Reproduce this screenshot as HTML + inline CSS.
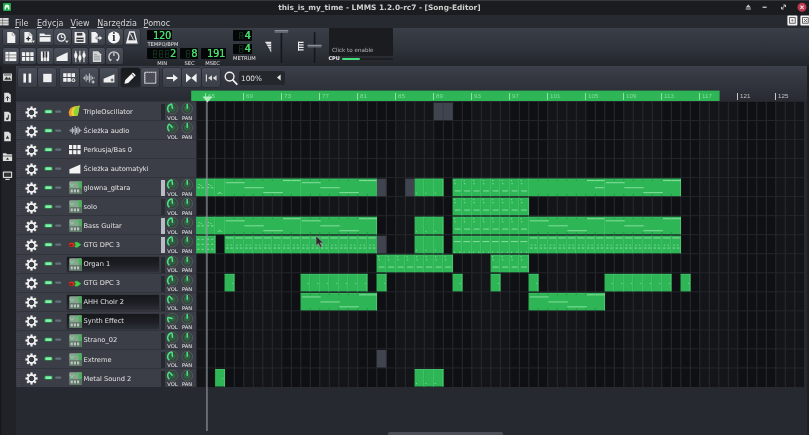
<!DOCTYPE html><html lang="pl"><head><meta charset="utf-8"><title>this_is_my_time - LMMS 1.2.0-rc7 - [Song-Editor]</title><style>
*{margin:0;padding:0;box-sizing:border-box}
html,body{width:809px;height:435px;overflow:hidden;background:#262930}
body{position:relative;filter:blur(.4px);font-family:"DejaVu Sans","Liberation Sans",sans-serif;color:#d8d8d8}
.a{position:absolute}
.m::first-letter{text-decoration:underline}
.t{position:absolute;white-space:nowrap;line-height:1}
#title{left:0;top:0;width:809px;height:15px;background:#1b1c1f}
#menu{left:0;top:14.5px;width:809px;height:14px;background:#272b31}
#tb{left:0;top:28px;width:809px;height:38px;background:linear-gradient(#3a3e47,#30343c 50%,#23262b)}
#side{left:0;top:66px;width:16px;height:369px;background:#202228;box-shadow:inset 1.5px 0 0 #17181b}
#se{left:16px;top:66px;width:793px;height:36px;background:linear-gradient(#3c404a,#33363f 40%,#272a31)}
#tl{left:16px;top:90px;width:793px;height:12px;background:transparent}
#tracks{left:16px;top:101px;width:180px;height:286px;background:#3b3e47}
#grid{left:196px;top:101px;width:608px;height:286px;background:#0f1013}
.btn{position:absolute;width:16.4px;height:16px;border-radius:2px;background:linear-gradient(#4c505a,#3b3f48);box-shadow:0 0 0 .5px #24272c}
.sbtn{position:absolute;width:18.6px;height:19px;border-radius:2px;background:linear-gradient(#4a4e58,#3a3e47);box-shadow:0 0 0 .5px #24272c}
.lcd{position:absolute;background:#050607;border-radius:1px;color:#46e06c;font-family:"DejaVu Sans Condensed","DejaVu Sans","Liberation Sans",sans-serif;font-weight:normal;text-align:right;line-height:1;overflow:hidden;letter-spacing:-.15px;text-shadow:.35px 0 0 currentColor}
.lab{position:absolute;font-size:5.2px;color:#e6e6e6;white-space:nowrap;line-height:1}
.clip{position:absolute;background:#2db556;height:18px;box-shadow:inset -0.7px 0 0 #27a04b, inset .5px 0 0 #46c56c}
.gclip{position:absolute;background:#40444f;height:18px}
.n{position:absolute;height:.9px;background:#8fe3a3}
.row{position:absolute;left:0;width:180px;height:19px;border-top:1px solid #31343b}
.name{position:absolute;left:67.5px;top:6.8px;font-size:6.66px;color:#e4e4e4;white-space:nowrap;line-height:1}
.kl{position:absolute;font-size:5.2px;color:#ececec;top:13.5px;line-height:1}
</style></head><body>
<div class="a" id="title"></div>
<div class="a" style="left:0;top:0;width:809px;height:1px;background:#35373a"></div>
<svg class="a" style="left:3px;top:3px" width="8" height="8" viewBox="0 0 8 8"><rect width="8" height="8" rx="1" fill="#1fa84a"/><path d="M1.6 6.6V4a2.4 2.4 0 0 1 4.8 0v2.6H4.9V4.6H3.1v2z" fill="#e9fff0"/></svg>
<div class="t" style="left:0;width:758.8px;text-align:center;top:4.2px;font-size:7.42px;font-weight:bold;color:#cfcfcf">this_is_my_time - LMMS 1.2.0-rc7 - [Song-Editor]</div>
<svg class="a" style="left:740px;top:0" width="69" height="15" viewBox="0 0 69 15"><path d="M5.7 7.6 8.3 4.6 10.9 7.6z M5.7 8.4h5.2v1.2H5.7z" fill="#c9c9c9"/><rect x="22.6" y="6.6" width="4" height="1.3" fill="#c9c9c9"/><path d="M41.6 8.9 45.4 5.1M43.4 5h2.1v2.1M41.5 6.9V9h2.1" stroke="#c9c9c9" stroke-width="1" fill="none"/><circle cx="62" cy="7.2" r="4.5" fill="#bb3a52"/><path d="M60.4 5.6 63.6 8.8M63.6 5.6 60.4 8.8" stroke="#f4dfe2" stroke-width="1.1"/></svg>
<div class="a" id="menu"></div>
<svg class="a" style="left:0;top:18px" width="9" height="8" viewBox="0 0 9 8"><rect width="8.6" height="7.4" fill="#d9d9d9"/><path d="M0 2.4h9M0 5h9M2.6 0v8" stroke="#555" stroke-width=".6"/></svg>
<div class="t m" style="left:15px;top:19.6px;font-size:8px;color:#d4d4d4">File</div>
<div class="t m" style="left:37px;top:19.6px;font-size:8px;color:#d4d4d4">Edycja</div>
<div class="t m" style="left:70.6px;top:19.6px;font-size:8px;color:#d4d4d4">View</div>
<div class="t m" style="left:97.3px;top:19.6px;font-size:8px;color:#d4d4d4">Narzędzia</div>
<div class="t m" style="left:143.6px;top:19.6px;font-size:8px;color:#d4d4d4">Pomoc</div>
<svg class="a" style="left:787.4px;top:15.2px" width="22" height="11" viewBox="0 0 22 11"><rect x=".4" y=".4" width="10" height="10" rx="1" fill="#f2f2f2"/><rect x="2.6" y="2.6" width="5.6" height="5.6" fill="none" stroke="#444" stroke-width=".8"/><path d="M4 5.4h2.8M5.4 4v2.8" stroke="#666" stroke-width=".6"/><rect x="13.4" y=".4" width="10" height="10" rx="1" fill="#f2f2f2"/><rect x="15.6" y="2.6" width="5.6" height="5.6" fill="none" stroke="#444" stroke-width=".8"/><path d="M17 4l3 3M20 4l-3 3" stroke="#444" stroke-width=".8"/></svg>
<div class="a" id="tb"></div>
<div class="btn" style="left:2.60px;top:29px"><svg width="16.4" height="17" viewBox="0 0 16.4 17"><path d="M4.2 3h5.2l2.9 2.9v8H4.2z" fill="#f0f0f0"/><path d="M9.2 3.2v3h3" fill="none" stroke="#8d9096" stroke-width=".7"/></svg></div>
<div class="btn" style="left:19.88px;top:29px"><svg width="16.4" height="17" viewBox="0 0 16.4 17"><path d="M4.4 3h5l2.9 2.9v7.5H4.4z" fill="#f0f0f0"/><path d="M9.2 3.2v3h3" fill="none" stroke="#8d9096" stroke-width=".7"/><path d="M6.2 9.7h4.2M8.3 7.6v4.2" stroke="#2a2c31" stroke-width="1.3"/><path d="M11.6 11.6h3.6l-1.8 2.4z" fill="#f0f0f0" stroke="#42464f" stroke-width=".4"/></svg></div>
<div class="btn" style="left:37.16px;top:29px"><svg width="16.4" height="17" viewBox="0 0 16.4 17"><path d="M2.6 4.4h4.6l1 1.3h5.4v7.1H2.6z" fill="#f0f0f0"/><path d="M2.6 7.6h11" stroke="#42464f" stroke-width="1"/></svg></div>
<div class="btn" style="left:54.44px;top:29px"><svg width="16.4" height="17" viewBox="0 0 16.4 17"><circle cx="7.4" cy="8.4" r="3.7" fill="none" stroke="#f0f0f0" stroke-width="1.4"/><path d="M7.4 6.2v2.4h2" stroke="#f0f0f0" stroke-width="1" fill="none"/><path d="M10.8 11.6h4l-2 2.6z" fill="#f0f0f0" stroke="#42464f" stroke-width=".4"/></svg></div>
<div class="btn" style="left:71.72px;top:29px"><svg width="16.4" height="17" viewBox="0 0 16.4 17"><path d="M2.6 3.1h9l1.8 1.8V14H2.6z" fill="#f0f0f0"/><rect x="4.8" y="3.8" width="5.6" height="2.8" fill="#3a3d45"/><rect x="4.4" y="8.6" width="7.2" height="4.2" fill="#2a2c31"/><rect x="4.4" y="10.2" width="7.2" height="1" fill="#f0f0f0"/></svg></div>
<div class="btn" style="left:89.00px;top:29px"><svg width="16.4" height="17" viewBox="0 0 16.4 17"><path d="M2.4 3h4.2l2.1 2.1v8.7H2.4z" fill="#f0f0f0"/><path d="M7 8.1h3.2V6.2l3.4 2.8-3.4 2.8V9.9H7z" fill="#f0f0f0" stroke="#3e424a" stroke-width=".6"/></svg></div>
<div class="btn" style="left:106.28px;top:29px"><svg width="16.4" height="17" viewBox="0 0 16.4 17"><circle cx="7.9" cy="8.4" r="6" fill="#f4f4f4"/><text x="7.9" y="12.3" font-family="Liberation Serif,serif" font-weight="bold" font-size="11.5" text-anchor="middle" fill="#2a2c31">i</text></svg></div>
<div class="btn" style="left:123.56px;top:29px"><svg width="16.4" height="17" viewBox="0 0 16.4 17"><path d="M5.2 2.2h5.4l3.2 12.4H1.9z" fill="#f0f0f0"/><path d="M6.2 3.8h3.4l2 7.4H4.3z" fill="#3a3d45"/><path d="M6.2 4.4 9.4 10.6" stroke="#f0f0f0" stroke-width="1"/></svg></div>
<div class="btn" style="left:2.60px;top:48px"><svg width="16.4" height="17" viewBox="0 0 16.4 17"><rect x="2.4" y="3.9" width="11" height="9.2" fill="#f0f0f0"/><path d="M2.4 6.9h11M2.4 9.9h11M5.8 3.9v9.2" stroke="#5a5e67" stroke-width=".7"/></svg></div>
<div class="btn" style="left:19.88px;top:48px"><svg width="16.4" height="17" viewBox="0 0 16.4 17"><g fill="#f0f0f0"><rect x="1.9" y="4.2" width="3.3" height="3.9"/><rect x="6.1" y="4.2" width="3.3" height="3.9"/><rect x="10.3" y="4.2" width="3.3" height="3.9"/><rect x="1.9" y="9" width="3.3" height="3.9"/><rect x="6.1" y="9" width="3.3" height="3.9"/><rect x="10.3" y="9" width="3.3" height="3.9"/></g></svg></div>
<div class="btn" style="left:37.16px;top:48px"><svg width="16.4" height="17" viewBox="0 0 16.4 17"><rect x="3.9" y="3.5" width="8.2" height="9.6" fill="#f0f0f0"/><path d="M6.6 3.5v9.6M9.4 3.5v9.6" stroke="#2a2c31" stroke-width=".6"/><rect x="5.8" y="3.5" width="1.6" height="6" fill="#2a2c31"/><rect x="8.6" y="3.5" width="1.6" height="6" fill="#2a2c31"/></svg></div>
<div class="btn" style="left:54.44px;top:48px"><svg width="16.4" height="17" viewBox="0 0 16.4 17"><path d="M2.5 13.1V9.4l11.2-5.2v8.9z" fill="#f0f0f0"/></svg></div>
<div class="btn" style="left:71.72px;top:48px"><svg width="16.4" height="17" viewBox="0 0 16.4 17"><path d="M3.8 2.8v11.4M7.9 2.8v11.4M12 2.8v11.4" stroke="#f0f0f0" stroke-width="1"/><ellipse cx="3.8" cy="7.4" rx="1.6" ry="2.8" fill="#f0f0f0"/><ellipse cx="7.9" cy="9.8" rx="1.6" ry="2.8" fill="#f0f0f0"/><ellipse cx="12" cy="7.2" rx="1.6" ry="2.8" fill="#f0f0f0"/></svg></div>
<div class="btn" style="left:89.00px;top:48px"><svg width="16.4" height="17" viewBox="0 0 16.4 17"><path d="M3.8 3.2h5.4l3 3v7.9H3.8z" fill="#d6d6d6"/><path d="M5 6.4h3M5 8.2h6M5 10h6M5 11.8h6" stroke="#7d8087" stroke-width=".7"/></svg></div>
<div class="btn" style="left:106.28px;top:48px"><svg width="16.4" height="17" viewBox="0 0 16.4 17"><path d="M4.3 12.3A5 5 0 1 1 11.5 12.3" fill="none" stroke="#d0d0d0" stroke-width="1.4"/><path d="M7.9 4.4v3.6" stroke="#d0d0d0" stroke-width="1.3"/><path d="M2.8 11l1.6 2.6 1.7-2.2zM13 11l-1.6 2.6-1.7-2.2z" fill="#d0d0d0"/></svg></div>
<div class="lcd" style="left:147.4px;top:30px;width:24.8px;height:10.4px;font-size:10.8px;padding:0.50px 1.2px 0 0">120</div>
<div class="lab" style="left:147.4px;top:42.2px">TEMPO/BPM</div>
<div class="lcd" style="left:147.4px;top:48.2px;width:29.8px;height:11px;font-size:10.8px;padding:0.80px 1.2px 0 0">2</div>
<svg class="a" style="left:164.77px;top:49.70px" width="4.4" height="8.00" viewBox="0 0 4.4 8"><path d="M.5.5h3.4v7h-3.4zM.5 4h3.4" fill="none" stroke="#173822" stroke-width=".9"/></svg>
<svg class="a" style="left:158.74px;top:49.70px" width="4.4" height="8.00" viewBox="0 0 4.4 8"><path d="M.5.5h3.4v7h-3.4zM.5 4h3.4" fill="none" stroke="#173822" stroke-width=".9"/></svg>
<svg class="a" style="left:152.71px;top:49.70px" width="4.4" height="8.00" viewBox="0 0 4.4 8"><path d="M.5.5h3.4v7h-3.4zM.5 4h3.4" fill="none" stroke="#173822" stroke-width=".9"/></svg>
<div class="lcd" style="left:180.2px;top:48.2px;width:18.2px;height:11px;font-size:10.8px;padding:0.80px 1.2px 0 0">8</div>
<svg class="a" style="left:185.97px;top:49.70px" width="4.4" height="8.00" viewBox="0 0 4.4 8"><path d="M.5.5h3.4v7h-3.4zM.5 4h3.4" fill="none" stroke="#173822" stroke-width=".9"/></svg>
<div class="lcd" style="left:200.8px;top:48.2px;width:25.4px;height:11px;font-size:10.8px;padding:0.80px 1.2px 0 0">191</div>
<div class="lab" style="left:157.2px;top:60.6px">MIN</div>
<div class="lab" style="left:184.4px;top:60.6px">SEC</div>
<div class="lab" style="left:205.2px;top:60.6px">MSEC</div>
<div class="lcd" style="left:233.4px;top:30px;width:18.4px;height:10.6px;font-size:10.8px;padding:0.60px 1.2px 0 0">4</div>
<svg class="a" style="left:239.37px;top:31.50px" width="4.4" height="7.60" viewBox="0 0 4.4 8"><path d="M.5.5h3.4v7h-3.4zM.5 4h3.4" fill="none" stroke="#173822" stroke-width=".9"/></svg>
<div class="lcd" style="left:233.4px;top:43.6px;width:18.4px;height:10.8px;font-size:10.8px;padding:0.70px 1.2px 0 0">4</div>
<svg class="a" style="left:239.37px;top:45.10px" width="4.4" height="7.80" viewBox="0 0 4.4 8"><path d="M.5.5h3.4v7h-3.4zM.5 4h3.4" fill="none" stroke="#173822" stroke-width=".9"/></svg>
<div class="lab" style="left:233px;top:56px">METRUM</div>
<svg class="a" style="left:262px;top:28px" width="66" height="38" viewBox="0 0 66 38"><rect x="18.6" y="4" width="1.6" height="31" fill="#15171a"/><rect x="12.6" y="2.4" width="13.6" height="2.6" rx=".8" fill="#5f646e"/><rect x="12.6" y="2.2" width="13.6" height=".9" fill="#9aa0aa"/><path d="M3 13.8h6.2v10.6z" fill="#ececec"/><path d="M3 16.2h6.4M4 18.6h5.4M5.4 21h4" stroke="#30333a" stroke-width=".6"/><rect x="51.8" y="4" width="1.6" height="31" fill="#15171a"/><rect x="45.6" y="17" width="14" height="2.6" rx=".8" fill="#5f646e"/><rect x="45.6" y="16.8" width="14" height=".9" fill="#9aa0aa"/><path d="M36 14.4h5.6M36 16.9h5.6M36 19.4h5.6M36 21.9h5.6" stroke="#ececec" stroke-width="1.3"/><path d="M36.5 13.8v8.8" stroke="#ececec" stroke-width="1"/></svg>
<div class="a" style="left:328.8px;top:28px;width:64.6px;height:27.8px;background:#1a1c20;border-radius:1px"></div>
<div class="t" style="left:332px;top:48.2px;font-size:5.6px;color:#b4b7bd">Click to enable</div>
<div class="t" style="left:328.4px;top:56.4px;font-size:5px;color:#f0f0f0;font-weight:bold">CPU</div>
<div class="a" style="left:341.8px;top:57.8px;width:51px;height:2.2px;background:#1d1f23;border-radius:1px"></div>
<div class="a" style="left:341.8px;top:57.8px;width:18.6px;height:2.2px;background:#45e07c;border-radius:1px"></div>
<div class="a" id="side"></div>
<svg class="a" style="left:2px;top:72.2px" width="11" height="11" viewBox="0 0 10 10"><rect x="1" y="1.4" width="8" height="6.6" fill="#ddd"/><path d="M2 7 4 4l1.6 2 1.2-1.4L8.4 7z" fill="#333"/><rect x="1.8" y="2.2" width="6.4" height="1" fill="#555"/></svg>
<svg class="a" style="left:2px;top:91.8px" width="11" height="11" viewBox="0 0 10 10"><path d="M2 .6h4l2 2v6.8H2z" fill="#ddd"/><path d="M5 8V4.4M3.4 5.8 5 4.2l1.6 1.6" stroke="#333" stroke-width=".9" fill="none"/></svg>
<svg class="a" style="left:2px;top:111.4px" width="11" height="11" viewBox="0 0 10 10"><path d="M2 .6h4l2 2v6.8H2z" fill="#ddd"/><path d="M5.8 3.4v3.4" stroke="#333" stroke-width=".9"/><circle cx="4.8" cy="7" r="1.1" fill="#333"/></svg>
<svg class="a" style="left:2px;top:131.0px" width="11" height="11" viewBox="0 0 10 10"><path d="M2 .6h4l2 2v6.8H2z" fill="#ddd"/><path d="M5 4 6.6 7H3.4z" fill="#333"/></svg>
<svg class="a" style="left:2px;top:150.6px" width="11" height="11" viewBox="0 0 10 10"><path d="M.8 2h3l.8 1h4.6v6H.8z" fill="#ddd"/><path d="M.8 4.6h8.4" stroke="#333" stroke-width=".6"/><path d="M5 6 6.4 8H3.6z" fill="#333"/></svg>
<svg class="a" style="left:2px;top:170.2px" width="11" height="11" viewBox="0 0 10 10"><rect x=".8" y="1.4" width="8.4" height="5.8" rx=".6" fill="#ddd"/><rect x="1.8" y="2.4" width="6.4" height="3.8" fill="#333"/><rect x="3" y="8" width="4" height="1" fill="#ddd"/></svg>
<div class="a" id="se"></div>
<div class="sbtn" style="left:18.2px;top:68px;"><svg width="18.6" height="20" viewBox="0 0 18.6 20"><rect x="5.4" y="5.6" width="2.6" height="9" fill="#f0f0f0"/><rect x="10.6" y="5.6" width="2.6" height="9" fill="#f0f0f0"/></svg></div>
<div class="sbtn" style="left:37.6px;top:68px;"><svg width="18.6" height="20" viewBox="0 0 18.6 20"><rect x="5.2" y="5.8" width="8.4" height="8.4" fill="#f0f0f0"/></svg></div>
<div class="sbtn" style="left:60.2px;top:68px;"><svg width="18.6" height="20" viewBox="0 0 18.6 20"><g fill="#f0f0f0"><rect x="3.2" y="5.2" width="3.4" height="3.8"/><rect x="7.4" y="5.2" width="3.4" height="3.8"/><rect x="11.6" y="5.2" width="3.4" height="3.8"/><rect x="3.2" y="10" width="3.4" height="3.8"/><rect x="7.4" y="10" width="3.4" height="3.8"/><circle cx="13.4" cy="12.2" r="1.9"/></g><path d="M12.2 12.2h2.4M13.4 11v2.4" stroke="#3a3e47" stroke-width=".7"/></svg></div>
<div class="sbtn" style="left:79.8px;top:68px;"><svg width="18.6" height="20" viewBox="0 0 18.6 20"><path d="M3 10h1M4.6 8.4v3.2M6.2 6.6v6.8M7.8 8v4M9.4 5.4v9.2M11 7.4v5.2M12.6 8.8v2.4M14.2 9.6v.8" stroke="#b9bcc2" stroke-width="1.1"/><path d="M11.6 14h3M13.1 12.5v3" stroke="#f0f0f0" stroke-width=".9"/></svg></div>
<div class="sbtn" style="left:99.6px;top:68px;"><svg width="18.6" height="20" viewBox="0 0 18.6 20"><path d="M3.6 14.4v-3.6l10.8-4.6v8.2z" fill="#f0f0f0"/><path d="M10.6 12h3M12.1 10.5v3" stroke="#3a3e47" stroke-width=".9"/></svg></div>
<div class="sbtn" style="left:121px;top:68px;background:linear-gradient(#17191c,#202328);"><svg width="18.6" height="20" viewBox="0 0 18.6 20"><path d="M3.4 15.8l.9-3.8 7.6-7.6 2.9 2.9-7.6 7.6z" fill="#f4f4f4"/><path d="M10.5 5.8l2.9 2.9" stroke="#1c1e22" stroke-width=".9"/></svg></div>
<div class="sbtn" style="left:140.8px;top:68px;"><svg width="18.6" height="20" viewBox="0 0 18.6 20"><rect x="3.8" y="4.2" width="11" height="11" fill="#4a4d56" stroke="#e8e8e8" stroke-width="1.1" stroke-dasharray="1.6 .4"/></svg></div>
<div class="sbtn" style="left:162.8px;top:68px;"><svg width="18.6" height="20" viewBox="0 0 18.6 20"><path d="M3.6 9h6.4V6.2L15 10l-5 3.8V11H3.6z" fill="#f0f0f0"/></svg></div>
<div class="sbtn" style="left:182.4px;top:68px;"><svg width="18.6" height="20" viewBox="0 0 18.6 20"><path d="M4 5.4 9.3 10 4 14.6zM14.6 5.4 9.3 10l5.3 4.6z" fill="#f0f0f0"/></svg></div>
<div class="sbtn" style="left:201.8px;top:68px;"><svg width="18.6" height="20" viewBox="0 0 18.6 20"><path d="M4.4 6.4v7.2" stroke="#d8d8d8" stroke-width="1.2"/><path d="M10 7.2v5.6L6 10zM14.6 7.2v5.6l-4-2.8z" fill="#d8d8d8"/></svg></div>
<svg class="a" style="left:222px;top:68px" width="18" height="20" viewBox="0 0 18 20"><circle cx="7.6" cy="8.6" r="4.4" fill="none" stroke="#f0f0f0" stroke-width="1.4"/><path d="M10.8 12l4 4.2" stroke="#f0f0f0" stroke-width="1.8" stroke-linecap="round"/></svg>
<div class="a" style="left:238.6px;top:70.6px;width:46px;height:14.6px;background:#24272c;border-radius:2px"></div>
<div class="t" style="left:241px;top:74.6px;font-size:7.3px;color:#e2e2e2">100%</div>
<svg class="a" style="left:276px;top:74.4px" width="6" height="7" viewBox="0 0 6 7"><path d="M4.6.6v5.8L1 3.5z" fill="#e8e8e8"/></svg>
<div class="a" id="tl"></div>
<svg class="a" style="left:190px;top:89px" width="531" height="14" viewBox="190 89 531 14"><rect x="191.2" y="90.6" width="528.4" height="11" fill="#2db556"/></svg>
<div class="a" style="left:205.30px;top:92.6px;width:1px;height:7px;background:#8fe0a4"></div>
<div class="t" style="left:208.00px;top:93.4px;font-size:6.2px;font-family:&quot;Liberation Sans&quot;,sans-serif;color:#86dc9e">65</div>
<div class="a" style="left:243.30px;top:92.6px;width:1px;height:7px;background:#8fe0a4"></div>
<div class="t" style="left:246.00px;top:93.4px;font-size:6.2px;font-family:&quot;Liberation Sans&quot;,sans-serif;color:#86dc9e">69</div>
<div class="a" style="left:281.30px;top:92.6px;width:1px;height:7px;background:#8fe0a4"></div>
<div class="t" style="left:284.00px;top:93.4px;font-size:6.2px;font-family:&quot;Liberation Sans&quot;,sans-serif;color:#86dc9e">73</div>
<div class="a" style="left:319.30px;top:92.6px;width:1px;height:7px;background:#8fe0a4"></div>
<div class="t" style="left:322.00px;top:93.4px;font-size:6.2px;font-family:&quot;Liberation Sans&quot;,sans-serif;color:#86dc9e">77</div>
<div class="a" style="left:357.30px;top:92.6px;width:1px;height:7px;background:#8fe0a4"></div>
<div class="t" style="left:360.00px;top:93.4px;font-size:6.2px;font-family:&quot;Liberation Sans&quot;,sans-serif;color:#86dc9e">81</div>
<div class="a" style="left:395.30px;top:92.6px;width:1px;height:7px;background:#8fe0a4"></div>
<div class="t" style="left:398.00px;top:93.4px;font-size:6.2px;font-family:&quot;Liberation Sans&quot;,sans-serif;color:#86dc9e">85</div>
<div class="a" style="left:433.30px;top:92.6px;width:1px;height:7px;background:#8fe0a4"></div>
<div class="t" style="left:436.00px;top:93.4px;font-size:6.2px;font-family:&quot;Liberation Sans&quot;,sans-serif;color:#86dc9e">89</div>
<div class="a" style="left:471.30px;top:92.6px;width:1px;height:7px;background:#8fe0a4"></div>
<div class="t" style="left:474.00px;top:93.4px;font-size:6.2px;font-family:&quot;Liberation Sans&quot;,sans-serif;color:#86dc9e">93</div>
<div class="a" style="left:509.30px;top:92.6px;width:1px;height:7px;background:#8fe0a4"></div>
<div class="t" style="left:512.00px;top:93.4px;font-size:6.2px;font-family:&quot;Liberation Sans&quot;,sans-serif;color:#86dc9e">97</div>
<div class="a" style="left:547.30px;top:92.6px;width:1px;height:7px;background:#8fe0a4"></div>
<div class="t" style="left:550.00px;top:93.4px;font-size:6.2px;font-family:&quot;Liberation Sans&quot;,sans-serif;color:#86dc9e">101</div>
<div class="a" style="left:585.30px;top:92.6px;width:1px;height:7px;background:#8fe0a4"></div>
<div class="t" style="left:588.00px;top:93.4px;font-size:6.2px;font-family:&quot;Liberation Sans&quot;,sans-serif;color:#86dc9e">105</div>
<div class="a" style="left:623.30px;top:92.6px;width:1px;height:7px;background:#8fe0a4"></div>
<div class="t" style="left:626.00px;top:93.4px;font-size:6.2px;font-family:&quot;Liberation Sans&quot;,sans-serif;color:#86dc9e">109</div>
<div class="a" style="left:661.30px;top:92.6px;width:1px;height:7px;background:#8fe0a4"></div>
<div class="t" style="left:664.00px;top:93.4px;font-size:6.2px;font-family:&quot;Liberation Sans&quot;,sans-serif;color:#86dc9e">113</div>
<div class="a" style="left:699.30px;top:92.6px;width:1px;height:7px;background:#8fe0a4"></div>
<div class="t" style="left:702.00px;top:93.4px;font-size:6.2px;font-family:&quot;Liberation Sans&quot;,sans-serif;color:#86dc9e">117</div>
<div class="a" style="left:737.30px;top:92.6px;width:1px;height:7px;background:#c8c8c8"></div>
<div class="t" style="left:740.00px;top:93.4px;font-size:6.2px;font-family:&quot;Liberation Sans&quot;,sans-serif;color:#c4c4c4">121</div>
<div class="a" style="left:775.30px;top:92.6px;width:1px;height:7px;background:#c8c8c8"></div>
<div class="t" style="left:778.00px;top:93.4px;font-size:6.2px;font-family:&quot;Liberation Sans&quot;,sans-serif;color:#c4c4c4">125</div>
<div class="a" id="tracks"></div>
<div class="a" id="grid"></div>
<svg class="a" style="left:196px;top:101px" width="608.4" height="286" viewBox="196 101 608.4 286"><rect x="196" y="101" width="608.4" height="286" fill="#0f1013"/><rect x="196.00" y="101" width="9.80" height="286" fill="#141519"/><rect x="243.80" y="101" width="38.00" height="286" fill="#141519"/><rect x="319.80" y="101" width="38.00" height="286" fill="#141519"/><rect x="395.80" y="101" width="38.00" height="286" fill="#141519"/><rect x="471.80" y="101" width="38.00" height="286" fill="#141519"/><rect x="547.80" y="101" width="38.00" height="286" fill="#141519"/><rect x="623.80" y="101" width="38.00" height="286" fill="#141519"/><rect x="699.80" y="101" width="38.00" height="286" fill="#141519"/><rect x="775.80" y="101" width="28.60" height="286" fill="#141519"/><rect x="195.80" y="101" width="1" height="286" fill="#292b30"/><rect x="205.30" y="101" width="1" height="286" fill="#292b30"/><rect x="214.80" y="101" width="1" height="286" fill="#292b30"/><rect x="224.30" y="101" width="1" height="286" fill="#292b30"/><rect x="233.80" y="101" width="1" height="286" fill="#292b30"/><rect x="243.30" y="101" width="1" height="286" fill="#292b30"/><rect x="252.80" y="101" width="1" height="286" fill="#292b30"/><rect x="262.30" y="101" width="1" height="286" fill="#292b30"/><rect x="271.80" y="101" width="1" height="286" fill="#292b30"/><rect x="281.30" y="101" width="1" height="286" fill="#292b30"/><rect x="290.80" y="101" width="1" height="286" fill="#292b30"/><rect x="300.30" y="101" width="1" height="286" fill="#292b30"/><rect x="309.80" y="101" width="1" height="286" fill="#292b30"/><rect x="319.30" y="101" width="1" height="286" fill="#292b30"/><rect x="328.80" y="101" width="1" height="286" fill="#292b30"/><rect x="338.30" y="101" width="1" height="286" fill="#292b30"/><rect x="347.80" y="101" width="1" height="286" fill="#292b30"/><rect x="357.30" y="101" width="1" height="286" fill="#292b30"/><rect x="366.80" y="101" width="1" height="286" fill="#292b30"/><rect x="376.30" y="101" width="1" height="286" fill="#292b30"/><rect x="385.80" y="101" width="1" height="286" fill="#292b30"/><rect x="395.30" y="101" width="1" height="286" fill="#292b30"/><rect x="404.80" y="101" width="1" height="286" fill="#292b30"/><rect x="414.30" y="101" width="1" height="286" fill="#292b30"/><rect x="423.80" y="101" width="1" height="286" fill="#292b30"/><rect x="433.30" y="101" width="1" height="286" fill="#292b30"/><rect x="442.80" y="101" width="1" height="286" fill="#292b30"/><rect x="452.30" y="101" width="1" height="286" fill="#292b30"/><rect x="461.80" y="101" width="1" height="286" fill="#292b30"/><rect x="471.30" y="101" width="1" height="286" fill="#292b30"/><rect x="480.80" y="101" width="1" height="286" fill="#292b30"/><rect x="490.30" y="101" width="1" height="286" fill="#292b30"/><rect x="499.80" y="101" width="1" height="286" fill="#292b30"/><rect x="509.30" y="101" width="1" height="286" fill="#292b30"/><rect x="518.80" y="101" width="1" height="286" fill="#292b30"/><rect x="528.30" y="101" width="1" height="286" fill="#292b30"/><rect x="537.80" y="101" width="1" height="286" fill="#292b30"/><rect x="547.30" y="101" width="1" height="286" fill="#292b30"/><rect x="556.80" y="101" width="1" height="286" fill="#292b30"/><rect x="566.30" y="101" width="1" height="286" fill="#292b30"/><rect x="575.80" y="101" width="1" height="286" fill="#292b30"/><rect x="585.30" y="101" width="1" height="286" fill="#292b30"/><rect x="594.80" y="101" width="1" height="286" fill="#292b30"/><rect x="604.30" y="101" width="1" height="286" fill="#292b30"/><rect x="613.80" y="101" width="1" height="286" fill="#292b30"/><rect x="623.30" y="101" width="1" height="286" fill="#292b30"/><rect x="632.80" y="101" width="1" height="286" fill="#292b30"/><rect x="642.30" y="101" width="1" height="286" fill="#292b30"/><rect x="651.80" y="101" width="1" height="286" fill="#292b30"/><rect x="661.30" y="101" width="1" height="286" fill="#292b30"/><rect x="670.80" y="101" width="1" height="286" fill="#292b30"/><rect x="680.30" y="101" width="1" height="286" fill="#292b30"/><rect x="689.80" y="101" width="1" height="286" fill="#292b30"/><rect x="699.30" y="101" width="1" height="286" fill="#292b30"/><rect x="708.80" y="101" width="1" height="286" fill="#292b30"/><rect x="718.30" y="101" width="1" height="286" fill="#292b30"/><rect x="727.80" y="101" width="1" height="286" fill="#292b30"/><rect x="737.30" y="101" width="1" height="286" fill="#292b30"/><rect x="746.80" y="101" width="1" height="286" fill="#292b30"/><rect x="756.30" y="101" width="1" height="286" fill="#292b30"/><rect x="765.80" y="101" width="1" height="286" fill="#292b30"/><rect x="775.30" y="101" width="1" height="286" fill="#292b30"/><rect x="784.80" y="101" width="1" height="286" fill="#292b30"/><rect x="794.30" y="101" width="1" height="286" fill="#292b30"/><rect x="196" y="101.00" width="608.4" height="1" fill="#24262b"/><rect x="196" y="120.03" width="608.4" height="1" fill="#24262b"/><rect x="196" y="139.06" width="608.4" height="1" fill="#24262b"/><rect x="196" y="158.09" width="608.4" height="1" fill="#24262b"/><rect x="196" y="177.12" width="608.4" height="1" fill="#24262b"/><rect x="196" y="196.15" width="608.4" height="1" fill="#24262b"/><rect x="196" y="215.18" width="608.4" height="1" fill="#24262b"/><rect x="196" y="234.21" width="608.4" height="1" fill="#24262b"/><rect x="196" y="253.24" width="608.4" height="1" fill="#24262b"/><rect x="196" y="272.27" width="608.4" height="1" fill="#24262b"/><rect x="196" y="291.30" width="608.4" height="1" fill="#24262b"/><rect x="196" y="310.33" width="608.4" height="1" fill="#24262b"/><rect x="196" y="329.36" width="608.4" height="1" fill="#24262b"/><rect x="196" y="348.39" width="608.4" height="1" fill="#24262b"/><rect x="196" y="367.42" width="608.4" height="1" fill="#24262b"/></svg>
<div class="a" style="left:16px;top:101.2px;width:180px;height:0"><div class="row" style="top:0.00px"><div class="a" style="left:1px;top:3px;width:3px;height:15px;background:repeating-linear-gradient(#444750 0 1px,#383b43 1px 2px)"></div><svg class="a" style="left:8.8px;top:3.5px" width="13" height="13" viewBox="0 0 12 12"><g transform="translate(6,6)"><g fill="#f2f2f2"><rect x="-1" y="-5.6" width="2" height="3" transform="rotate(0)"/><rect x="-1" y="-5.6" width="2" height="3" transform="rotate(45)"/><rect x="-1" y="-5.6" width="2" height="3" transform="rotate(90)"/><rect x="-1" y="-5.6" width="2" height="3" transform="rotate(135)"/><rect x="-1" y="-5.6" width="2" height="3" transform="rotate(180)"/><rect x="-1" y="-5.6" width="2" height="3" transform="rotate(225)"/><rect x="-1" y="-5.6" width="2" height="3" transform="rotate(270)"/><rect x="-1" y="-5.6" width="2" height="3" transform="rotate(315)"/></g><circle r="3.3" fill="none" stroke="#f2f2f2" stroke-width="1.5"/></g></svg><svg class="a" style="left:26px;top:4.7px" width="22" height="9" viewBox="0 0 22 9"><rect x="2.2" y="2.4" width="8.6" height="4.4" rx="1.6" fill="#2a8f4c" opacity=".75"/><rect x="3.2" y="3.2" width="6.6" height="2.8" rx="1" fill="#7ff2a6"/><rect x="13.2" y="3.5" width="6" height="2.2" rx=".8" fill="#62707a"/></svg><svg class="a" style="left:52px;top:3px" width="13" height="13" viewBox="0 0 13 13"><path d="M2 11.6C-.4 8.6.6 3.4 5 1.8L11.4.6 9.4 10.2z" fill="#f29a2e"/><path d="M4.4 11C2.4 8.4 3.4 3.6 6.6 1.8l5-1-1.8 9.6z" fill="#e6d736"/><path d="M6.6 10.6C5 8 5.8 4 8.2 1.6l3.4-.8-1.8 9.4z" fill="#8fd436"/></svg><div class="name">TripleOscillator</div><div class="a" style="left:145.4px;top:2px;width:3.4px;height:16px;background:#262930"></div><svg class="a" style="left:149px;top:0px" width="31" height="13" viewBox="0 0 31 13"><circle cx="7.4" cy="6.6" r="5.4" fill="#39433f" stroke="#50665a" stroke-width=".8"/><circle cx="7.4" cy="6.6" r="3.2" fill="#2c7a4b" opacity=".55"/><path d="M4.38 10.20A4.7 4.7 0 0 1 6.75 1.95" fill="none" stroke="#43e67c" stroke-width="1.5"/><path d="M7.34 6.20L6.82 2.44" stroke="#4fea86" stroke-width="1.4" stroke-linecap="round"/><circle cx="22.2" cy="6.6" r="5.4" fill="#39433f" stroke="#50665a" stroke-width=".8"/><circle cx="22.2" cy="6.6" r="3.2" fill="#2c7a4b" opacity=".55"/><path d="M22.20 6.20L22.20 2.40" stroke="#4fea86" stroke-width="1.4" stroke-linecap="round"/></svg><div class="kl" style="left:151.2px">VOL</div><div class="kl" style="left:165.9px">PAN</div></div></div>
<div class="a" style="left:16px;top:101.2px;width:180px;height:0"><div class="row" style="top:19.04px"><div class="a" style="left:1px;top:3px;width:3px;height:15px;background:repeating-linear-gradient(#444750 0 1px,#383b43 1px 2px)"></div><svg class="a" style="left:8.8px;top:3.5px" width="13" height="13" viewBox="0 0 12 12"><g transform="translate(6,6)"><g fill="#f2f2f2"><rect x="-1" y="-5.6" width="2" height="3" transform="rotate(0)"/><rect x="-1" y="-5.6" width="2" height="3" transform="rotate(45)"/><rect x="-1" y="-5.6" width="2" height="3" transform="rotate(90)"/><rect x="-1" y="-5.6" width="2" height="3" transform="rotate(135)"/><rect x="-1" y="-5.6" width="2" height="3" transform="rotate(180)"/><rect x="-1" y="-5.6" width="2" height="3" transform="rotate(225)"/><rect x="-1" y="-5.6" width="2" height="3" transform="rotate(270)"/><rect x="-1" y="-5.6" width="2" height="3" transform="rotate(315)"/></g><circle r="3.3" fill="none" stroke="#f2f2f2" stroke-width="1.5"/></g></svg><svg class="a" style="left:26px;top:4.7px" width="22" height="9" viewBox="0 0 22 9"><rect x="2.2" y="2.4" width="8.6" height="4.4" rx="1.6" fill="#2a8f4c" opacity=".75"/><rect x="3.2" y="3.2" width="6.6" height="2.8" rx="1" fill="#7ff2a6"/><rect x="13.2" y="3.5" width="6" height="2.2" rx=".8" fill="#62707a"/></svg><svg class="a" style="left:52.8px;top:4px" width="13" height="11" viewBox="0 0 13 11"><path d="M.6 5.5h.6M2 4v3M3.4 2.4v6.2M4.8 3.8v3.4M6.2 1v9M7.6 3v5M9 1.8v7.4M10.4 3.6v3.8M11.8 4.8v1.4" stroke="#c3c6cc" stroke-width="1"/></svg><div class="name">Ścieżka audio</div><svg class="a" style="left:149px;top:0px" width="31" height="13" viewBox="0 0 31 13"><circle cx="7.4" cy="6.6" r="5.4" fill="#39433f" stroke="#50665a" stroke-width=".8"/><circle cx="7.4" cy="6.6" r="3.2" fill="#2c7a4b" opacity=".55"/><path d="M4.38 10.20A4.7 4.7 0 0 1 4.38 3.00" fill="none" stroke="#43e67c" stroke-width="1.5"/><path d="M7.14 6.29L4.70 3.38" stroke="#4fea86" stroke-width="1.4" stroke-linecap="round"/><circle cx="22.2" cy="6.6" r="5.4" fill="#39433f" stroke="#50665a" stroke-width=".8"/><circle cx="22.2" cy="6.6" r="3.2" fill="#2c7a4b" opacity=".55"/><path d="M22.20 6.20L22.20 2.40" stroke="#4fea86" stroke-width="1.4" stroke-linecap="round"/></svg><div class="kl" style="left:151.2px">VOL</div><div class="kl" style="left:165.9px">PAN</div></div></div>
<div class="a" style="left:16px;top:101.2px;width:180px;height:0"><div class="row" style="top:38.08px"><div class="a" style="left:1px;top:3px;width:3px;height:15px;background:repeating-linear-gradient(#444750 0 1px,#383b43 1px 2px)"></div><svg class="a" style="left:8.8px;top:3.5px" width="13" height="13" viewBox="0 0 12 12"><g transform="translate(6,6)"><g fill="#f2f2f2"><rect x="-1" y="-5.6" width="2" height="3" transform="rotate(0)"/><rect x="-1" y="-5.6" width="2" height="3" transform="rotate(45)"/><rect x="-1" y="-5.6" width="2" height="3" transform="rotate(90)"/><rect x="-1" y="-5.6" width="2" height="3" transform="rotate(135)"/><rect x="-1" y="-5.6" width="2" height="3" transform="rotate(180)"/><rect x="-1" y="-5.6" width="2" height="3" transform="rotate(225)"/><rect x="-1" y="-5.6" width="2" height="3" transform="rotate(270)"/><rect x="-1" y="-5.6" width="2" height="3" transform="rotate(315)"/></g><circle r="3.3" fill="none" stroke="#f2f2f2" stroke-width="1.5"/></g></svg><svg class="a" style="left:26px;top:4.7px" width="22" height="9" viewBox="0 0 22 9"><rect x="2.2" y="2.4" width="8.6" height="4.4" rx="1.6" fill="#2a8f4c" opacity=".75"/><rect x="3.2" y="3.2" width="6.6" height="2.8" rx="1" fill="#7ff2a6"/><rect x="13.2" y="3.5" width="6" height="2.2" rx=".8" fill="#62707a"/></svg><svg class="a" style="left:53.2px;top:4.4px" width="12" height="10" viewBox="0 0 12 10"><g fill="#f2f2f2"><rect x="0" y="0" width="3.2" height="4"/><rect x="4.2" y="0" width="3.2" height="4"/><rect x="8.4" y="0" width="3.2" height="4"/><rect x="0" y="5.2" width="3.2" height="4"/><rect x="4.2" y="5.2" width="3.2" height="4"/><rect x="8.4" y="5.2" width="3.2" height="4"/></g></svg><div class="name">Perkusja/Bas 0</div></div></div>
<div class="a" style="left:16px;top:101.2px;width:180px;height:0"><div class="row" style="top:57.12px"><div class="a" style="left:1px;top:3px;width:3px;height:15px;background:repeating-linear-gradient(#444750 0 1px,#383b43 1px 2px)"></div><svg class="a" style="left:8.8px;top:3.5px" width="13" height="13" viewBox="0 0 12 12"><g transform="translate(6,6)"><g fill="#f2f2f2"><rect x="-1" y="-5.6" width="2" height="3" transform="rotate(0)"/><rect x="-1" y="-5.6" width="2" height="3" transform="rotate(45)"/><rect x="-1" y="-5.6" width="2" height="3" transform="rotate(90)"/><rect x="-1" y="-5.6" width="2" height="3" transform="rotate(135)"/><rect x="-1" y="-5.6" width="2" height="3" transform="rotate(180)"/><rect x="-1" y="-5.6" width="2" height="3" transform="rotate(225)"/><rect x="-1" y="-5.6" width="2" height="3" transform="rotate(270)"/><rect x="-1" y="-5.6" width="2" height="3" transform="rotate(315)"/></g><circle r="3.3" fill="none" stroke="#f2f2f2" stroke-width="1.5"/></g></svg><svg class="a" style="left:26px;top:4.7px" width="22" height="9" viewBox="0 0 22 9"><rect x="2.2" y="2.4" width="8.6" height="4.4" rx="1.6" fill="#2a8f4c" opacity=".75"/><rect x="3.2" y="3.2" width="6.6" height="2.8" rx="1" fill="#7ff2a6"/><rect x="13.2" y="3.5" width="6" height="2.2" rx=".8" fill="#62707a"/></svg><svg class="a" style="left:53.2px;top:4.6px" width="12" height="10" viewBox="0 0 12 10"><path d="M.4 9.4V5.2L11.4.6v8.8z" fill="#f2f2f2"/></svg><div class="name">Ścieżka automatyki</div></div></div>
<div class="a" style="left:16px;top:101.2px;width:180px;height:0"><div class="row" style="top:76.16px"><div class="a" style="left:1px;top:3px;width:3px;height:15px;background:repeating-linear-gradient(#444750 0 1px,#383b43 1px 2px)"></div><svg class="a" style="left:8.8px;top:3.5px" width="13" height="13" viewBox="0 0 12 12"><g transform="translate(6,6)"><g fill="#f2f2f2"><rect x="-1" y="-5.6" width="2" height="3" transform="rotate(0)"/><rect x="-1" y="-5.6" width="2" height="3" transform="rotate(45)"/><rect x="-1" y="-5.6" width="2" height="3" transform="rotate(90)"/><rect x="-1" y="-5.6" width="2" height="3" transform="rotate(135)"/><rect x="-1" y="-5.6" width="2" height="3" transform="rotate(180)"/><rect x="-1" y="-5.6" width="2" height="3" transform="rotate(225)"/><rect x="-1" y="-5.6" width="2" height="3" transform="rotate(270)"/><rect x="-1" y="-5.6" width="2" height="3" transform="rotate(315)"/></g><circle r="3.3" fill="none" stroke="#f2f2f2" stroke-width="1.5"/></g></svg><svg class="a" style="left:26px;top:4.7px" width="22" height="9" viewBox="0 0 22 9"><rect x="2.2" y="2.4" width="8.6" height="4.4" rx="1.6" fill="#2a8f4c" opacity=".75"/><rect x="3.2" y="3.2" width="6.6" height="2.8" rx="1" fill="#7ff2a6"/><rect x="13.2" y="3.5" width="6" height="2.2" rx=".8" fill="#62707a"/></svg><svg class="a" style="left:53px;top:3px" width="13" height="13" viewBox="0 0 13 13"><rect x=".3" y=".3" width="12.4" height="12.4" rx=".8" fill="#8da294"/><rect x="9.6" y=".3" width="3.1" height="12.4" fill="#4fae5c"/><rect x=".3" y="7.2" width="12.4" height="5.5" fill="#5b6f63"/><path d="M1 3.4C2.2 6.6 3.6 6.6 5 3.6S8 .8 9.6 3.4s2 3 2.8 1" fill="none" stroke="#3fc45e" stroke-width="1"/><path d="M1 2.6C2.2 5.8 3.6 5.8 5 2.8" fill="none" stroke="#e8f4ea" stroke-width=".6" opacity=".8"/><g fill="#b9c6bd"><rect x="1.6" y="8.4" width="2.2" height="3"/><rect x="4.8" y="8.4" width="2.2" height="3"/><rect x="8" y="8.4" width="2.2" height="3"/></g></svg><div class="name">glowna_gitara</div><div class="a" style="left:145.4px;top:2px;width:3.4px;height:16px;background:#b9bcc4"></div><svg class="a" style="left:149px;top:0px" width="31" height="13" viewBox="0 0 31 13"><circle cx="7.4" cy="6.6" r="5.4" fill="#39433f" stroke="#50665a" stroke-width=".8"/><circle cx="7.4" cy="6.6" r="3.2" fill="#2c7a4b" opacity=".55"/><path d="M4.38 10.20A4.7 4.7 0 0 1 7.07 1.91" fill="none" stroke="#43e67c" stroke-width="1.5"/><path d="M7.37 6.20L7.11 2.41" stroke="#4fea86" stroke-width="1.4" stroke-linecap="round"/><circle cx="22.2" cy="6.6" r="5.4" fill="#39433f" stroke="#50665a" stroke-width=".8"/><circle cx="22.2" cy="6.6" r="3.2" fill="#2c7a4b" opacity=".55"/><path d="M22.20 6.20L22.20 2.40" stroke="#4fea86" stroke-width="1.4" stroke-linecap="round"/></svg><div class="kl" style="left:151.2px">VOL</div><div class="kl" style="left:165.9px">PAN</div></div></div>
<div class="a" style="left:16px;top:101.2px;width:180px;height:0"><div class="row" style="top:95.20px"><div class="a" style="left:1px;top:3px;width:3px;height:15px;background:repeating-linear-gradient(#444750 0 1px,#383b43 1px 2px)"></div><svg class="a" style="left:8.8px;top:3.5px" width="13" height="13" viewBox="0 0 12 12"><g transform="translate(6,6)"><g fill="#f2f2f2"><rect x="-1" y="-5.6" width="2" height="3" transform="rotate(0)"/><rect x="-1" y="-5.6" width="2" height="3" transform="rotate(45)"/><rect x="-1" y="-5.6" width="2" height="3" transform="rotate(90)"/><rect x="-1" y="-5.6" width="2" height="3" transform="rotate(135)"/><rect x="-1" y="-5.6" width="2" height="3" transform="rotate(180)"/><rect x="-1" y="-5.6" width="2" height="3" transform="rotate(225)"/><rect x="-1" y="-5.6" width="2" height="3" transform="rotate(270)"/><rect x="-1" y="-5.6" width="2" height="3" transform="rotate(315)"/></g><circle r="3.3" fill="none" stroke="#f2f2f2" stroke-width="1.5"/></g></svg><svg class="a" style="left:26px;top:4.7px" width="22" height="9" viewBox="0 0 22 9"><rect x="2.2" y="2.4" width="8.6" height="4.4" rx="1.6" fill="#2a8f4c" opacity=".75"/><rect x="3.2" y="3.2" width="6.6" height="2.8" rx="1" fill="#7ff2a6"/><rect x="13.2" y="3.5" width="6" height="2.2" rx=".8" fill="#62707a"/></svg><svg class="a" style="left:53px;top:3px" width="13" height="13" viewBox="0 0 13 13"><rect x=".3" y=".3" width="12.4" height="12.4" rx=".8" fill="#8da294"/><rect x="9.6" y=".3" width="3.1" height="12.4" fill="#4fae5c"/><rect x=".3" y="7.2" width="12.4" height="5.5" fill="#5b6f63"/><path d="M1 3.4C2.2 6.6 3.6 6.6 5 3.6S8 .8 9.6 3.4s2 3 2.8 1" fill="none" stroke="#3fc45e" stroke-width="1"/><path d="M1 2.6C2.2 5.8 3.6 5.8 5 2.8" fill="none" stroke="#e8f4ea" stroke-width=".6" opacity=".8"/><g fill="#b9c6bd"><rect x="1.6" y="8.4" width="2.2" height="3"/><rect x="4.8" y="8.4" width="2.2" height="3"/><rect x="8" y="8.4" width="2.2" height="3"/></g></svg><div class="name">solo</div><div class="a" style="left:145.4px;top:2px;width:3.4px;height:16px;background:#2a2d34"></div><svg class="a" style="left:149px;top:0px" width="31" height="13" viewBox="0 0 31 13"><circle cx="7.4" cy="6.6" r="5.4" fill="#39433f" stroke="#50665a" stroke-width=".8"/><circle cx="7.4" cy="6.6" r="3.2" fill="#2c7a4b" opacity=".55"/><path d="M4.38 10.20A4.7 4.7 0 0 1 7.07 1.91" fill="none" stroke="#43e67c" stroke-width="1.5"/><path d="M7.37 6.20L7.11 2.41" stroke="#4fea86" stroke-width="1.4" stroke-linecap="round"/><circle cx="22.2" cy="6.6" r="5.4" fill="#39433f" stroke="#50665a" stroke-width=".8"/><circle cx="22.2" cy="6.6" r="3.2" fill="#2c7a4b" opacity=".55"/><path d="M22.20 6.20L22.20 2.40" stroke="#4fea86" stroke-width="1.4" stroke-linecap="round"/></svg><div class="kl" style="left:151.2px">VOL</div><div class="kl" style="left:165.9px">PAN</div></div></div>
<div class="a" style="left:16px;top:101.2px;width:180px;height:0"><div class="row" style="top:114.24px"><div class="a" style="left:1px;top:3px;width:3px;height:15px;background:repeating-linear-gradient(#444750 0 1px,#383b43 1px 2px)"></div><svg class="a" style="left:8.8px;top:3.5px" width="13" height="13" viewBox="0 0 12 12"><g transform="translate(6,6)"><g fill="#f2f2f2"><rect x="-1" y="-5.6" width="2" height="3" transform="rotate(0)"/><rect x="-1" y="-5.6" width="2" height="3" transform="rotate(45)"/><rect x="-1" y="-5.6" width="2" height="3" transform="rotate(90)"/><rect x="-1" y="-5.6" width="2" height="3" transform="rotate(135)"/><rect x="-1" y="-5.6" width="2" height="3" transform="rotate(180)"/><rect x="-1" y="-5.6" width="2" height="3" transform="rotate(225)"/><rect x="-1" y="-5.6" width="2" height="3" transform="rotate(270)"/><rect x="-1" y="-5.6" width="2" height="3" transform="rotate(315)"/></g><circle r="3.3" fill="none" stroke="#f2f2f2" stroke-width="1.5"/></g></svg><svg class="a" style="left:26px;top:4.7px" width="22" height="9" viewBox="0 0 22 9"><rect x="2.2" y="2.4" width="8.6" height="4.4" rx="1.6" fill="#2a8f4c" opacity=".75"/><rect x="3.2" y="3.2" width="6.6" height="2.8" rx="1" fill="#7ff2a6"/><rect x="13.2" y="3.5" width="6" height="2.2" rx=".8" fill="#62707a"/></svg><svg class="a" style="left:53px;top:3px" width="13" height="13" viewBox="0 0 13 13"><rect x=".3" y=".3" width="12.4" height="12.4" rx=".8" fill="#8da294"/><rect x="9.6" y=".3" width="3.1" height="12.4" fill="#4fae5c"/><rect x=".3" y="7.2" width="12.4" height="5.5" fill="#5b6f63"/><path d="M1 3.4C2.2 6.6 3.6 6.6 5 3.6S8 .8 9.6 3.4s2 3 2.8 1" fill="none" stroke="#3fc45e" stroke-width="1"/><path d="M1 2.6C2.2 5.8 3.6 5.8 5 2.8" fill="none" stroke="#e8f4ea" stroke-width=".6" opacity=".8"/><g fill="#b9c6bd"><rect x="1.6" y="8.4" width="2.2" height="3"/><rect x="4.8" y="8.4" width="2.2" height="3"/><rect x="8" y="8.4" width="2.2" height="3"/></g></svg><div class="name">Bass Guitar</div><div class="a" style="left:145.4px;top:2px;width:3.4px;height:16px;background:#b9bcc4"></div><svg class="a" style="left:149px;top:0px" width="31" height="13" viewBox="0 0 31 13"><circle cx="7.4" cy="6.6" r="5.4" fill="#39433f" stroke="#50665a" stroke-width=".8"/><circle cx="7.4" cy="6.6" r="3.2" fill="#2c7a4b" opacity=".55"/><path d="M4.38 10.20A4.7 4.7 0 0 1 7.07 1.91" fill="none" stroke="#43e67c" stroke-width="1.5"/><path d="M7.37 6.20L7.11 2.41" stroke="#4fea86" stroke-width="1.4" stroke-linecap="round"/><circle cx="22.2" cy="6.6" r="5.4" fill="#39433f" stroke="#50665a" stroke-width=".8"/><circle cx="22.2" cy="6.6" r="3.2" fill="#2c7a4b" opacity=".55"/><path d="M22.20 6.20L22.20 2.40" stroke="#4fea86" stroke-width="1.4" stroke-linecap="round"/></svg><div class="kl" style="left:151.2px">VOL</div><div class="kl" style="left:165.9px">PAN</div></div></div>
<div class="a" style="left:16px;top:101.2px;width:180px;height:0"><div class="row" style="top:133.28px"><div class="a" style="left:1px;top:3px;width:3px;height:15px;background:repeating-linear-gradient(#444750 0 1px,#383b43 1px 2px)"></div><svg class="a" style="left:8.8px;top:3.5px" width="13" height="13" viewBox="0 0 12 12"><g transform="translate(6,6)"><g fill="#f2f2f2"><rect x="-1" y="-5.6" width="2" height="3" transform="rotate(0)"/><rect x="-1" y="-5.6" width="2" height="3" transform="rotate(45)"/><rect x="-1" y="-5.6" width="2" height="3" transform="rotate(90)"/><rect x="-1" y="-5.6" width="2" height="3" transform="rotate(135)"/><rect x="-1" y="-5.6" width="2" height="3" transform="rotate(180)"/><rect x="-1" y="-5.6" width="2" height="3" transform="rotate(225)"/><rect x="-1" y="-5.6" width="2" height="3" transform="rotate(270)"/><rect x="-1" y="-5.6" width="2" height="3" transform="rotate(315)"/></g><circle r="3.3" fill="none" stroke="#f2f2f2" stroke-width="1.5"/></g></svg><svg class="a" style="left:26px;top:4.7px" width="22" height="9" viewBox="0 0 22 9"><rect x="2.2" y="2.4" width="8.6" height="4.4" rx="1.6" fill="#2a8f4c" opacity=".75"/><rect x="3.2" y="3.2" width="6.6" height="2.8" rx="1" fill="#7ff2a6"/><rect x="13.2" y="3.5" width="6" height="2.2" rx=".8" fill="#62707a"/></svg><svg class="a" style="left:52px;top:5px" width="13" height="9" viewBox="0 0 13 9"><ellipse cx="3.8" cy="4.7" rx="2.9" ry="2.3" fill="#d92f24"/><ellipse cx="3.2" cy="5.2" rx="1.6" ry="1.2" fill="#8e1d16"/><path d="M7 2.4h2.6l3 2.3-3 2.3H7l1-2.3z" fill="#3fcf4c" stroke="#3fcf4c" stroke-width=".8" stroke-linejoin="round"/></svg><div class="name">GTG DPC 3</div><div class="a" style="left:145.4px;top:2px;width:3.4px;height:16px;background:#b9bcc4"></div><svg class="a" style="left:149px;top:0px" width="31" height="13" viewBox="0 0 31 13"><circle cx="7.4" cy="6.6" r="5.4" fill="#39433f" stroke="#50665a" stroke-width=".8"/><circle cx="7.4" cy="6.6" r="3.2" fill="#2c7a4b" opacity=".55"/><path d="M4.38 10.20A4.7 4.7 0 0 1 7.07 1.91" fill="none" stroke="#43e67c" stroke-width="1.5"/><path d="M7.37 6.20L7.11 2.41" stroke="#4fea86" stroke-width="1.4" stroke-linecap="round"/><circle cx="22.2" cy="6.6" r="5.4" fill="#39433f" stroke="#50665a" stroke-width=".8"/><circle cx="22.2" cy="6.6" r="3.2" fill="#2c7a4b" opacity=".55"/><path d="M22.20 6.20L22.20 2.40" stroke="#4fea86" stroke-width="1.4" stroke-linecap="round"/></svg><div class="kl" style="left:151.2px">VOL</div><div class="kl" style="left:165.9px">PAN</div></div></div>
<div class="a" style="left:16px;top:101.2px;width:180px;height:0"><div class="row" style="top:152.32px"><div class="a" style="left:1px;top:3px;width:3px;height:15px;background:repeating-linear-gradient(#444750 0 1px,#383b43 1px 2px)"></div><svg class="a" style="left:8.8px;top:3.5px" width="13" height="13" viewBox="0 0 12 12"><g transform="translate(6,6)"><g fill="#f2f2f2"><rect x="-1" y="-5.6" width="2" height="3" transform="rotate(0)"/><rect x="-1" y="-5.6" width="2" height="3" transform="rotate(45)"/><rect x="-1" y="-5.6" width="2" height="3" transform="rotate(90)"/><rect x="-1" y="-5.6" width="2" height="3" transform="rotate(135)"/><rect x="-1" y="-5.6" width="2" height="3" transform="rotate(180)"/><rect x="-1" y="-5.6" width="2" height="3" transform="rotate(225)"/><rect x="-1" y="-5.6" width="2" height="3" transform="rotate(270)"/><rect x="-1" y="-5.6" width="2" height="3" transform="rotate(315)"/></g><circle r="3.3" fill="none" stroke="#f2f2f2" stroke-width="1.5"/></g></svg><svg class="a" style="left:26px;top:4.7px" width="22" height="9" viewBox="0 0 22 9"><rect x="2.2" y="2.4" width="8.6" height="4.4" rx="1.6" fill="#2a8f4c" opacity=".75"/><rect x="3.2" y="3.2" width="6.6" height="2.8" rx="1" fill="#7ff2a6"/><rect x="13.2" y="3.5" width="6" height="2.2" rx=".8" fill="#62707a"/></svg><div class="a" style="left:50.6px;top:2px;width:92px;height:15px;border-radius:.5px;background:linear-gradient(#15171b,#1c1e23 50%,#2c2f36);box-shadow:0 0 0 .7px #33363d"></div><svg class="a" style="left:53px;top:3px" width="13" height="13" viewBox="0 0 13 13"><rect x=".3" y=".3" width="12.4" height="12.4" rx=".8" fill="#8da294"/><rect x="9.6" y=".3" width="3.1" height="12.4" fill="#4fae5c"/><rect x=".3" y="7.2" width="12.4" height="5.5" fill="#5b6f63"/><path d="M1 3.4C2.2 6.6 3.6 6.6 5 3.6S8 .8 9.6 3.4s2 3 2.8 1" fill="none" stroke="#3fc45e" stroke-width="1"/><path d="M1 2.6C2.2 5.8 3.6 5.8 5 2.8" fill="none" stroke="#e8f4ea" stroke-width=".6" opacity=".8"/><g fill="#b9c6bd"><rect x="1.6" y="8.4" width="2.2" height="3"/><rect x="4.8" y="8.4" width="2.2" height="3"/><rect x="8" y="8.4" width="2.2" height="3"/></g></svg><div class="name">Organ 1</div><div class="a" style="left:145.4px;top:2px;width:3.4px;height:16px;background:#262930"></div><svg class="a" style="left:149px;top:0px" width="31" height="13" viewBox="0 0 31 13"><circle cx="7.4" cy="6.6" r="5.4" fill="#39433f" stroke="#50665a" stroke-width=".8"/><circle cx="7.4" cy="6.6" r="3.2" fill="#2c7a4b" opacity=".55"/><path d="M4.38 10.20A4.7 4.7 0 0 1 7.07 1.91" fill="none" stroke="#43e67c" stroke-width="1.5"/><path d="M7.37 6.20L7.11 2.41" stroke="#4fea86" stroke-width="1.4" stroke-linecap="round"/><circle cx="22.2" cy="6.6" r="5.4" fill="#39433f" stroke="#50665a" stroke-width=".8"/><circle cx="22.2" cy="6.6" r="3.2" fill="#2c7a4b" opacity=".55"/><path d="M22.20 6.20L22.20 2.40" stroke="#4fea86" stroke-width="1.4" stroke-linecap="round"/></svg><div class="kl" style="left:151.2px">VOL</div><div class="kl" style="left:165.9px">PAN</div></div></div>
<div class="a" style="left:16px;top:101.2px;width:180px;height:0"><div class="row" style="top:171.36px"><div class="a" style="left:1px;top:3px;width:3px;height:15px;background:repeating-linear-gradient(#444750 0 1px,#383b43 1px 2px)"></div><svg class="a" style="left:8.8px;top:3.5px" width="13" height="13" viewBox="0 0 12 12"><g transform="translate(6,6)"><g fill="#f2f2f2"><rect x="-1" y="-5.6" width="2" height="3" transform="rotate(0)"/><rect x="-1" y="-5.6" width="2" height="3" transform="rotate(45)"/><rect x="-1" y="-5.6" width="2" height="3" transform="rotate(90)"/><rect x="-1" y="-5.6" width="2" height="3" transform="rotate(135)"/><rect x="-1" y="-5.6" width="2" height="3" transform="rotate(180)"/><rect x="-1" y="-5.6" width="2" height="3" transform="rotate(225)"/><rect x="-1" y="-5.6" width="2" height="3" transform="rotate(270)"/><rect x="-1" y="-5.6" width="2" height="3" transform="rotate(315)"/></g><circle r="3.3" fill="none" stroke="#f2f2f2" stroke-width="1.5"/></g></svg><svg class="a" style="left:26px;top:4.7px" width="22" height="9" viewBox="0 0 22 9"><rect x="2.2" y="2.4" width="8.6" height="4.4" rx="1.6" fill="#2a8f4c" opacity=".75"/><rect x="3.2" y="3.2" width="6.6" height="2.8" rx="1" fill="#7ff2a6"/><rect x="13.2" y="3.5" width="6" height="2.2" rx=".8" fill="#62707a"/></svg><svg class="a" style="left:52px;top:5px" width="13" height="9" viewBox="0 0 13 9"><ellipse cx="3.8" cy="4.7" rx="2.9" ry="2.3" fill="#d92f24"/><ellipse cx="3.2" cy="5.2" rx="1.6" ry="1.2" fill="#8e1d16"/><path d="M7 2.4h2.6l3 2.3-3 2.3H7l1-2.3z" fill="#3fcf4c" stroke="#3fcf4c" stroke-width=".8" stroke-linejoin="round"/></svg><div class="name">GTG DPC 3</div><div class="a" style="left:145.4px;top:2px;width:3.4px;height:16px;background:#262930"></div><svg class="a" style="left:149px;top:0px" width="31" height="13" viewBox="0 0 31 13"><circle cx="7.4" cy="6.6" r="5.4" fill="#39433f" stroke="#50665a" stroke-width=".8"/><circle cx="7.4" cy="6.6" r="3.2" fill="#2c7a4b" opacity=".55"/><path d="M4.38 10.20A4.7 4.7 0 0 1 7.07 1.91" fill="none" stroke="#43e67c" stroke-width="1.5"/><path d="M7.37 6.20L7.11 2.41" stroke="#4fea86" stroke-width="1.4" stroke-linecap="round"/><circle cx="22.2" cy="6.6" r="5.4" fill="#39433f" stroke="#50665a" stroke-width=".8"/><circle cx="22.2" cy="6.6" r="3.2" fill="#2c7a4b" opacity=".55"/><path d="M22.20 6.20L22.20 2.40" stroke="#4fea86" stroke-width="1.4" stroke-linecap="round"/></svg><div class="kl" style="left:151.2px">VOL</div><div class="kl" style="left:165.9px">PAN</div></div></div>
<div class="a" style="left:16px;top:101.2px;width:180px;height:0"><div class="row" style="top:190.40px"><div class="a" style="left:1px;top:3px;width:3px;height:15px;background:repeating-linear-gradient(#444750 0 1px,#383b43 1px 2px)"></div><svg class="a" style="left:8.8px;top:3.5px" width="13" height="13" viewBox="0 0 12 12"><g transform="translate(6,6)"><g fill="#f2f2f2"><rect x="-1" y="-5.6" width="2" height="3" transform="rotate(0)"/><rect x="-1" y="-5.6" width="2" height="3" transform="rotate(45)"/><rect x="-1" y="-5.6" width="2" height="3" transform="rotate(90)"/><rect x="-1" y="-5.6" width="2" height="3" transform="rotate(135)"/><rect x="-1" y="-5.6" width="2" height="3" transform="rotate(180)"/><rect x="-1" y="-5.6" width="2" height="3" transform="rotate(225)"/><rect x="-1" y="-5.6" width="2" height="3" transform="rotate(270)"/><rect x="-1" y="-5.6" width="2" height="3" transform="rotate(315)"/></g><circle r="3.3" fill="none" stroke="#f2f2f2" stroke-width="1.5"/></g></svg><svg class="a" style="left:26px;top:4.7px" width="22" height="9" viewBox="0 0 22 9"><rect x="2.2" y="2.4" width="8.6" height="4.4" rx="1.6" fill="#2a8f4c" opacity=".75"/><rect x="3.2" y="3.2" width="6.6" height="2.8" rx="1" fill="#7ff2a6"/><rect x="13.2" y="3.5" width="6" height="2.2" rx=".8" fill="#62707a"/></svg><div class="a" style="left:50.6px;top:2px;width:92px;height:15px;border-radius:.5px;background:linear-gradient(#15171b,#1c1e23 50%,#2c2f36);box-shadow:0 0 0 .7px #33363d"></div><svg class="a" style="left:53px;top:3px" width="13" height="13" viewBox="0 0 13 13"><rect x=".3" y=".3" width="12.4" height="12.4" rx=".8" fill="#8da294"/><rect x="9.6" y=".3" width="3.1" height="12.4" fill="#4fae5c"/><rect x=".3" y="7.2" width="12.4" height="5.5" fill="#5b6f63"/><path d="M1 3.4C2.2 6.6 3.6 6.6 5 3.6S8 .8 9.6 3.4s2 3 2.8 1" fill="none" stroke="#3fc45e" stroke-width="1"/><path d="M1 2.6C2.2 5.8 3.6 5.8 5 2.8" fill="none" stroke="#e8f4ea" stroke-width=".6" opacity=".8"/><g fill="#b9c6bd"><rect x="1.6" y="8.4" width="2.2" height="3"/><rect x="4.8" y="8.4" width="2.2" height="3"/><rect x="8" y="8.4" width="2.2" height="3"/></g></svg><div class="name">AHH Choir 2</div><div class="a" style="left:145.4px;top:2px;width:3.4px;height:16px;background:#262930"></div><svg class="a" style="left:149px;top:0px" width="31" height="13" viewBox="0 0 31 13"><circle cx="7.4" cy="6.6" r="5.4" fill="#39433f" stroke="#50665a" stroke-width=".8"/><circle cx="7.4" cy="6.6" r="3.2" fill="#2c7a4b" opacity=".55"/><path d="M4.38 10.20A4.7 4.7 0 0 1 4.38 3.00" fill="none" stroke="#43e67c" stroke-width="1.5"/><path d="M7.14 6.29L4.70 3.38" stroke="#4fea86" stroke-width="1.4" stroke-linecap="round"/><circle cx="22.2" cy="6.6" r="5.4" fill="#39433f" stroke="#50665a" stroke-width=".8"/><circle cx="22.2" cy="6.6" r="3.2" fill="#2c7a4b" opacity=".55"/><path d="M22.20 6.20L22.20 2.40" stroke="#4fea86" stroke-width="1.4" stroke-linecap="round"/></svg><div class="kl" style="left:151.2px">VOL</div><div class="kl" style="left:165.9px">PAN</div></div></div>
<div class="a" style="left:16px;top:101.2px;width:180px;height:0"><div class="row" style="top:209.44px"><div class="a" style="left:1px;top:3px;width:3px;height:15px;background:repeating-linear-gradient(#444750 0 1px,#383b43 1px 2px)"></div><svg class="a" style="left:8.8px;top:3.5px" width="13" height="13" viewBox="0 0 12 12"><g transform="translate(6,6)"><g fill="#f2f2f2"><rect x="-1" y="-5.6" width="2" height="3" transform="rotate(0)"/><rect x="-1" y="-5.6" width="2" height="3" transform="rotate(45)"/><rect x="-1" y="-5.6" width="2" height="3" transform="rotate(90)"/><rect x="-1" y="-5.6" width="2" height="3" transform="rotate(135)"/><rect x="-1" y="-5.6" width="2" height="3" transform="rotate(180)"/><rect x="-1" y="-5.6" width="2" height="3" transform="rotate(225)"/><rect x="-1" y="-5.6" width="2" height="3" transform="rotate(270)"/><rect x="-1" y="-5.6" width="2" height="3" transform="rotate(315)"/></g><circle r="3.3" fill="none" stroke="#f2f2f2" stroke-width="1.5"/></g></svg><svg class="a" style="left:26px;top:4.7px" width="22" height="9" viewBox="0 0 22 9"><rect x="2.2" y="2.4" width="8.6" height="4.4" rx="1.6" fill="#2a8f4c" opacity=".75"/><rect x="3.2" y="3.2" width="6.6" height="2.8" rx="1" fill="#7ff2a6"/><rect x="13.2" y="3.5" width="6" height="2.2" rx=".8" fill="#62707a"/></svg><div class="a" style="left:50.6px;top:2px;width:92px;height:15px;border-radius:.5px;background:linear-gradient(#15171b,#1c1e23 50%,#2c2f36);box-shadow:0 0 0 .7px #33363d"></div><svg class="a" style="left:53px;top:3px" width="13" height="13" viewBox="0 0 13 13"><rect x=".3" y=".3" width="12.4" height="12.4" rx=".8" fill="#8da294"/><rect x="9.6" y=".3" width="3.1" height="12.4" fill="#4fae5c"/><rect x=".3" y="7.2" width="12.4" height="5.5" fill="#5b6f63"/><path d="M1 3.4C2.2 6.6 3.6 6.6 5 3.6S8 .8 9.6 3.4s2 3 2.8 1" fill="none" stroke="#3fc45e" stroke-width="1"/><path d="M1 2.6C2.2 5.8 3.6 5.8 5 2.8" fill="none" stroke="#e8f4ea" stroke-width=".6" opacity=".8"/><g fill="#b9c6bd"><rect x="1.6" y="8.4" width="2.2" height="3"/><rect x="4.8" y="8.4" width="2.2" height="3"/><rect x="8" y="8.4" width="2.2" height="3"/></g></svg><div class="name">Synth Effect</div><div class="a" style="left:145.4px;top:2px;width:3.4px;height:16px;background:#262930"></div><svg class="a" style="left:149px;top:0px" width="31" height="13" viewBox="0 0 31 13"><circle cx="7.4" cy="6.6" r="5.4" fill="#39433f" stroke="#50665a" stroke-width=".8"/><circle cx="7.4" cy="6.6" r="3.2" fill="#2c7a4b" opacity=".55"/><path d="M4.38 10.20A4.7 4.7 0 0 1 2.86 5.38" fill="none" stroke="#43e67c" stroke-width="1.5"/><path d="M7.01 6.50L3.34 5.51" stroke="#4fea86" stroke-width="1.4" stroke-linecap="round"/><circle cx="22.2" cy="6.6" r="5.4" fill="#39433f" stroke="#50665a" stroke-width=".8"/><circle cx="22.2" cy="6.6" r="3.2" fill="#2c7a4b" opacity=".55"/><path d="M22.20 6.20L22.20 2.40" stroke="#4fea86" stroke-width="1.4" stroke-linecap="round"/></svg><div class="kl" style="left:151.2px">VOL</div><div class="kl" style="left:165.9px">PAN</div></div></div>
<div class="a" style="left:16px;top:101.2px;width:180px;height:0"><div class="row" style="top:228.48px"><div class="a" style="left:1px;top:3px;width:3px;height:15px;background:repeating-linear-gradient(#444750 0 1px,#383b43 1px 2px)"></div><svg class="a" style="left:8.8px;top:3.5px" width="13" height="13" viewBox="0 0 12 12"><g transform="translate(6,6)"><g fill="#f2f2f2"><rect x="-1" y="-5.6" width="2" height="3" transform="rotate(0)"/><rect x="-1" y="-5.6" width="2" height="3" transform="rotate(45)"/><rect x="-1" y="-5.6" width="2" height="3" transform="rotate(90)"/><rect x="-1" y="-5.6" width="2" height="3" transform="rotate(135)"/><rect x="-1" y="-5.6" width="2" height="3" transform="rotate(180)"/><rect x="-1" y="-5.6" width="2" height="3" transform="rotate(225)"/><rect x="-1" y="-5.6" width="2" height="3" transform="rotate(270)"/><rect x="-1" y="-5.6" width="2" height="3" transform="rotate(315)"/></g><circle r="3.3" fill="none" stroke="#f2f2f2" stroke-width="1.5"/></g></svg><svg class="a" style="left:26px;top:4.7px" width="22" height="9" viewBox="0 0 22 9"><rect x="2.2" y="2.4" width="8.6" height="4.4" rx="1.6" fill="#2a8f4c" opacity=".75"/><rect x="3.2" y="3.2" width="6.6" height="2.8" rx="1" fill="#7ff2a6"/><rect x="13.2" y="3.5" width="6" height="2.2" rx=".8" fill="#62707a"/></svg><svg class="a" style="left:53px;top:3px" width="13" height="13" viewBox="0 0 13 13"><rect x=".3" y=".3" width="12.4" height="12.4" rx=".8" fill="#8da294"/><rect x="9.6" y=".3" width="3.1" height="12.4" fill="#4fae5c"/><rect x=".3" y="7.2" width="12.4" height="5.5" fill="#5b6f63"/><path d="M1 3.4C2.2 6.6 3.6 6.6 5 3.6S8 .8 9.6 3.4s2 3 2.8 1" fill="none" stroke="#3fc45e" stroke-width="1"/><path d="M1 2.6C2.2 5.8 3.6 5.8 5 2.8" fill="none" stroke="#e8f4ea" stroke-width=".6" opacity=".8"/><g fill="#b9c6bd"><rect x="1.6" y="8.4" width="2.2" height="3"/><rect x="4.8" y="8.4" width="2.2" height="3"/><rect x="8" y="8.4" width="2.2" height="3"/></g></svg><div class="name">Strano_02</div><div class="a" style="left:145.4px;top:2px;width:3.4px;height:16px;background:#262930"></div><svg class="a" style="left:149px;top:0px" width="31" height="13" viewBox="0 0 31 13"><circle cx="7.4" cy="6.6" r="5.4" fill="#39433f" stroke="#50665a" stroke-width=".8"/><circle cx="7.4" cy="6.6" r="3.2" fill="#2c7a4b" opacity=".55"/><path d="M4.38 10.20A4.7 4.7 0 0 1 7.07 1.91" fill="none" stroke="#43e67c" stroke-width="1.5"/><path d="M7.37 6.20L7.11 2.41" stroke="#4fea86" stroke-width="1.4" stroke-linecap="round"/><circle cx="22.2" cy="6.6" r="5.4" fill="#39433f" stroke="#50665a" stroke-width=".8"/><circle cx="22.2" cy="6.6" r="3.2" fill="#2c7a4b" opacity=".55"/><path d="M22.20 6.20L22.20 2.40" stroke="#4fea86" stroke-width="1.4" stroke-linecap="round"/></svg><div class="kl" style="left:151.2px">VOL</div><div class="kl" style="left:165.9px">PAN</div></div></div>
<div class="a" style="left:16px;top:101.2px;width:180px;height:0"><div class="row" style="top:247.52px"><div class="a" style="left:1px;top:3px;width:3px;height:15px;background:repeating-linear-gradient(#444750 0 1px,#383b43 1px 2px)"></div><svg class="a" style="left:8.8px;top:3.5px" width="13" height="13" viewBox="0 0 12 12"><g transform="translate(6,6)"><g fill="#f2f2f2"><rect x="-1" y="-5.6" width="2" height="3" transform="rotate(0)"/><rect x="-1" y="-5.6" width="2" height="3" transform="rotate(45)"/><rect x="-1" y="-5.6" width="2" height="3" transform="rotate(90)"/><rect x="-1" y="-5.6" width="2" height="3" transform="rotate(135)"/><rect x="-1" y="-5.6" width="2" height="3" transform="rotate(180)"/><rect x="-1" y="-5.6" width="2" height="3" transform="rotate(225)"/><rect x="-1" y="-5.6" width="2" height="3" transform="rotate(270)"/><rect x="-1" y="-5.6" width="2" height="3" transform="rotate(315)"/></g><circle r="3.3" fill="none" stroke="#f2f2f2" stroke-width="1.5"/></g></svg><svg class="a" style="left:26px;top:4.7px" width="22" height="9" viewBox="0 0 22 9"><rect x="2.2" y="2.4" width="8.6" height="4.4" rx="1.6" fill="#2a8f4c" opacity=".75"/><rect x="3.2" y="3.2" width="6.6" height="2.8" rx="1" fill="#7ff2a6"/><rect x="13.2" y="3.5" width="6" height="2.2" rx=".8" fill="#62707a"/></svg><svg class="a" style="left:53px;top:3px" width="13" height="13" viewBox="0 0 13 13"><rect x=".3" y=".3" width="12.4" height="12.4" rx=".8" fill="#8da294"/><rect x="9.6" y=".3" width="3.1" height="12.4" fill="#4fae5c"/><rect x=".3" y="7.2" width="12.4" height="5.5" fill="#5b6f63"/><path d="M1 3.4C2.2 6.6 3.6 6.6 5 3.6S8 .8 9.6 3.4s2 3 2.8 1" fill="none" stroke="#3fc45e" stroke-width="1"/><path d="M1 2.6C2.2 5.8 3.6 5.8 5 2.8" fill="none" stroke="#e8f4ea" stroke-width=".6" opacity=".8"/><g fill="#b9c6bd"><rect x="1.6" y="8.4" width="2.2" height="3"/><rect x="4.8" y="8.4" width="2.2" height="3"/><rect x="8" y="8.4" width="2.2" height="3"/></g></svg><div class="name">Extreme</div><div class="a" style="left:145.4px;top:2px;width:3.4px;height:16px;background:#262930"></div><svg class="a" style="left:149px;top:0px" width="31" height="13" viewBox="0 0 31 13"><circle cx="7.4" cy="6.6" r="5.4" fill="#39433f" stroke="#50665a" stroke-width=".8"/><circle cx="7.4" cy="6.6" r="3.2" fill="#2c7a4b" opacity=".55"/><path d="M4.38 10.20A4.7 4.7 0 0 1 7.07 1.91" fill="none" stroke="#43e67c" stroke-width="1.5"/><path d="M7.37 6.20L7.11 2.41" stroke="#4fea86" stroke-width="1.4" stroke-linecap="round"/><circle cx="22.2" cy="6.6" r="5.4" fill="#39433f" stroke="#50665a" stroke-width=".8"/><circle cx="22.2" cy="6.6" r="3.2" fill="#2c7a4b" opacity=".55"/><path d="M22.20 6.20L22.20 2.40" stroke="#4fea86" stroke-width="1.4" stroke-linecap="round"/></svg><div class="kl" style="left:151.2px">VOL</div><div class="kl" style="left:165.9px">PAN</div></div></div>
<div class="a" style="left:16px;top:101.2px;width:180px;height:0"><div class="row" style="top:266.56px"><div class="a" style="left:1px;top:3px;width:3px;height:15px;background:repeating-linear-gradient(#444750 0 1px,#383b43 1px 2px)"></div><svg class="a" style="left:8.8px;top:3.5px" width="13" height="13" viewBox="0 0 12 12"><g transform="translate(6,6)"><g fill="#f2f2f2"><rect x="-1" y="-5.6" width="2" height="3" transform="rotate(0)"/><rect x="-1" y="-5.6" width="2" height="3" transform="rotate(45)"/><rect x="-1" y="-5.6" width="2" height="3" transform="rotate(90)"/><rect x="-1" y="-5.6" width="2" height="3" transform="rotate(135)"/><rect x="-1" y="-5.6" width="2" height="3" transform="rotate(180)"/><rect x="-1" y="-5.6" width="2" height="3" transform="rotate(225)"/><rect x="-1" y="-5.6" width="2" height="3" transform="rotate(270)"/><rect x="-1" y="-5.6" width="2" height="3" transform="rotate(315)"/></g><circle r="3.3" fill="none" stroke="#f2f2f2" stroke-width="1.5"/></g></svg><svg class="a" style="left:26px;top:4.7px" width="22" height="9" viewBox="0 0 22 9"><rect x="2.2" y="2.4" width="8.6" height="4.4" rx="1.6" fill="#2a8f4c" opacity=".75"/><rect x="3.2" y="3.2" width="6.6" height="2.8" rx="1" fill="#7ff2a6"/><rect x="13.2" y="3.5" width="6" height="2.2" rx=".8" fill="#62707a"/></svg><svg class="a" style="left:53px;top:3px" width="13" height="13" viewBox="0 0 13 13"><rect x=".3" y=".3" width="12.4" height="12.4" rx=".8" fill="#8da294"/><rect x="9.6" y=".3" width="3.1" height="12.4" fill="#4fae5c"/><rect x=".3" y="7.2" width="12.4" height="5.5" fill="#5b6f63"/><path d="M1 3.4C2.2 6.6 3.6 6.6 5 3.6S8 .8 9.6 3.4s2 3 2.8 1" fill="none" stroke="#3fc45e" stroke-width="1"/><path d="M1 2.6C2.2 5.8 3.6 5.8 5 2.8" fill="none" stroke="#e8f4ea" stroke-width=".6" opacity=".8"/><g fill="#b9c6bd"><rect x="1.6" y="8.4" width="2.2" height="3"/><rect x="4.8" y="8.4" width="2.2" height="3"/><rect x="8" y="8.4" width="2.2" height="3"/></g></svg><div class="name">Metal Sound 2</div><div class="a" style="left:145.4px;top:2px;width:3.4px;height:16px;background:#262930"></div><svg class="a" style="left:149px;top:0px" width="31" height="13" viewBox="0 0 31 13"><circle cx="7.4" cy="6.6" r="5.4" fill="#39433f" stroke="#50665a" stroke-width=".8"/><circle cx="7.4" cy="6.6" r="3.2" fill="#2c7a4b" opacity=".55"/><path d="M4.38 10.20A4.7 4.7 0 0 1 4.38 3.00" fill="none" stroke="#43e67c" stroke-width="1.5"/><path d="M7.14 6.29L4.70 3.38" stroke="#4fea86" stroke-width="1.4" stroke-linecap="round"/><circle cx="22.2" cy="6.6" r="5.4" fill="#39433f" stroke="#50665a" stroke-width=".8"/><circle cx="22.2" cy="6.6" r="3.2" fill="#2c7a4b" opacity=".55"/><path d="M22.20 6.20L22.20 2.40" stroke="#4fea86" stroke-width="1.4" stroke-linecap="round"/></svg><div class="kl" style="left:151.2px">VOL</div><div class="kl" style="left:165.9px">PAN</div></div></div>
<svg class="a" style="left:0;top:0" width="809" height="435" viewBox="0 0 809 435"><rect x="433.80" y="102.6" width="9.50" height="17.5" fill="#40444f"/><rect x="442.60" y="102.6" width=".7" height="17.5" fill="#363a44"/><rect x="443.30" y="102.6" width="9.50" height="17.5" fill="#40444f"/><rect x="452.10" y="102.6" width=".7" height="17.5" fill="#363a44"/><rect x="196.01" y="178.7" width="9.99" height="17.5" fill="#2db556"/><rect x="205.00" y="178.7" width=".8" height="17.5" fill="#52cb77"/><rect x="196.21" y="178.7" width="9.59" height=".7" fill="#43c26a"/><rect x="198.41" y="184.1" width="1.2" height=".9" fill="#8fe3a3"/><rect x="200.61" y="185.1" width="1.2" height=".9" fill="#8fe3a3"/><rect x="197.41" y="187.3" width="2.4" height=".9" fill="#8fe3a3"/><rect x="201.41" y="187.3" width="2.4" height=".9" fill="#8fe3a3"/><rect x="205.60" y="178.7" width="9.90" height="17.5" fill="#2db556"/><rect x="214.50" y="178.7" width=".8" height="17.5" fill="#52cb77"/><rect x="205.80" y="178.7" width="9.50" height=".7" fill="#43c26a"/><rect x="208.00" y="184.1" width="1.2" height=".9" fill="#8fe3a3"/><rect x="210.20" y="185.1" width="1.2" height=".9" fill="#8fe3a3"/><rect x="207.00" y="187.3" width="2.4" height=".9" fill="#8fe3a3"/><rect x="211.00" y="187.3" width="2.4" height=".9" fill="#8fe3a3"/><rect x="215.10" y="178.7" width="9.90" height="17.5" fill="#2db556"/><rect x="224.00" y="178.7" width=".8" height="17.5" fill="#52cb77"/><rect x="215.30" y="178.7" width="9.50" height=".7" fill="#43c26a"/><rect x="217.70" y="193.1" width="1.2" height=".9" fill="#8fe3a3"/><rect x="218.90" y="192.1" width="1.6" height=".9" fill="#8fe3a3"/><rect x="220.50" y="193.1" width="1.2" height=".9" fill="#8fe3a3"/><rect x="224.60" y="178.7" width="76.40" height="17.5" fill="#2db556"/><rect x="300.00" y="178.7" width=".8" height="17.5" fill="#52cb77"/><rect x="224.80" y="178.7" width="76.00" height=".7" fill="#43c26a"/><rect x="233.80" y="179.5" width="1" height="1.2" fill="#1f8a40"/><rect x="233.80" y="194.1" width="1" height="1.2" fill="#1f8a40"/><rect x="243.30" y="179.5" width="1" height="1.2" fill="#1f8a40"/><rect x="243.30" y="194.1" width="1" height="1.2" fill="#1f8a40"/><rect x="252.80" y="179.5" width="1" height="1.2" fill="#1f8a40"/><rect x="252.80" y="194.1" width="1" height="1.2" fill="#1f8a40"/><rect x="262.30" y="179.5" width="1" height="1.2" fill="#1f8a40"/><rect x="262.30" y="194.1" width="1" height="1.2" fill="#1f8a40"/><rect x="271.80" y="179.5" width="1" height="1.2" fill="#1f8a40"/><rect x="271.80" y="194.1" width="1" height="1.2" fill="#1f8a40"/><rect x="281.30" y="179.5" width="1" height="1.2" fill="#1f8a40"/><rect x="281.30" y="194.1" width="1" height="1.2" fill="#1f8a40"/><rect x="290.80" y="179.5" width="1" height="1.2" fill="#1f8a40"/><rect x="290.80" y="194.1" width="1" height="1.2" fill="#1f8a40"/><rect x="225.80" y="182.3" width="19.0" height=".9" fill="#8fe3a3"/><rect x="244.30" y="187.3" width="19.5" height=".9" fill="#8fe3a3"/><rect x="263.30" y="192.2" width="19.5" height=".9" fill="#8fe3a3"/><rect x="282.80" y="180.2" width="18.0" height=".9" fill="#8fe3a3"/><rect x="300.60" y="178.7" width="76.40" height="17.5" fill="#2db556"/><rect x="376.00" y="178.7" width=".8" height="17.5" fill="#52cb77"/><rect x="300.80" y="178.7" width="76.00" height=".7" fill="#43c26a"/><rect x="309.80" y="179.5" width="1" height="1.2" fill="#1f8a40"/><rect x="309.80" y="194.1" width="1" height="1.2" fill="#1f8a40"/><rect x="319.30" y="179.5" width="1" height="1.2" fill="#1f8a40"/><rect x="319.30" y="194.1" width="1" height="1.2" fill="#1f8a40"/><rect x="328.80" y="179.5" width="1" height="1.2" fill="#1f8a40"/><rect x="328.80" y="194.1" width="1" height="1.2" fill="#1f8a40"/><rect x="338.30" y="179.5" width="1" height="1.2" fill="#1f8a40"/><rect x="338.30" y="194.1" width="1" height="1.2" fill="#1f8a40"/><rect x="347.80" y="179.5" width="1" height="1.2" fill="#1f8a40"/><rect x="347.80" y="194.1" width="1" height="1.2" fill="#1f8a40"/><rect x="357.30" y="179.5" width="1" height="1.2" fill="#1f8a40"/><rect x="357.30" y="194.1" width="1" height="1.2" fill="#1f8a40"/><rect x="366.80" y="179.5" width="1" height="1.2" fill="#1f8a40"/><rect x="366.80" y="194.1" width="1" height="1.2" fill="#1f8a40"/><rect x="301.80" y="182.3" width="19.0" height=".9" fill="#8fe3a3"/><rect x="320.30" y="187.3" width="19.5" height=".9" fill="#8fe3a3"/><rect x="339.30" y="192.2" width="19.5" height=".9" fill="#8fe3a3"/><rect x="358.80" y="180.2" width="18.0" height=".9" fill="#8fe3a3"/><rect x="376.80" y="178.7" width="9.50" height="17.5" fill="#40444f"/><rect x="385.60" y="178.7" width=".7" height="17.5" fill="#363a44"/><rect x="405.30" y="178.7" width="9.50" height="17.5" fill="#40444f"/><rect x="414.10" y="178.7" width=".7" height="17.5" fill="#363a44"/><rect x="414.60" y="178.7" width="9.90" height="17.5" fill="#2db556"/><rect x="423.50" y="178.7" width=".8" height="17.5" fill="#52cb77"/><rect x="414.80" y="178.7" width="9.50" height=".7" fill="#43c26a"/><rect x="415.80" y="192.7" width="1.0" height=".9" fill="#8fe3a3"/><rect x="424.10" y="178.7" width="9.90" height="17.5" fill="#2db556"/><rect x="433.00" y="178.7" width=".8" height="17.5" fill="#52cb77"/><rect x="424.30" y="178.7" width="9.50" height=".7" fill="#43c26a"/><rect x="425.30" y="192.7" width="1.0" height=".9" fill="#8fe3a3"/><rect x="433.60" y="178.7" width="9.90" height="17.5" fill="#2db556"/><rect x="442.50" y="178.7" width=".8" height="17.5" fill="#52cb77"/><rect x="433.80" y="178.7" width="9.50" height=".7" fill="#43c26a"/><rect x="434.80" y="192.7" width="1.0" height=".9" fill="#8fe3a3"/><rect x="452.60" y="178.7" width="9.90" height="17.5" fill="#2db556"/><rect x="461.50" y="178.7" width=".8" height="17.5" fill="#52cb77"/><rect x="452.80" y="178.7" width="9.50" height=".7" fill="#43c26a"/><rect x="454.00" y="180.3" width="1.2" height=".9" fill="#8fe3a3"/><rect x="454.40" y="183.3" width="1.4" height=".9" fill="#8fe3a3"/><rect x="454.60" y="190.5" width="6.0" height=".9" fill="#8fe3a3"/><rect x="462.10" y="178.7" width="9.90" height="17.5" fill="#2db556"/><rect x="471.00" y="178.7" width=".8" height="17.5" fill="#52cb77"/><rect x="462.30" y="178.7" width="9.50" height=".7" fill="#43c26a"/><rect x="463.50" y="180.3" width="1.2" height=".9" fill="#8fe3a3"/><rect x="463.90" y="183.3" width="1.4" height=".9" fill="#8fe3a3"/><rect x="464.10" y="190.5" width="6.0" height=".9" fill="#8fe3a3"/><rect x="471.60" y="178.7" width="9.90" height="17.5" fill="#2db556"/><rect x="480.50" y="178.7" width=".8" height="17.5" fill="#52cb77"/><rect x="471.80" y="178.7" width="9.50" height=".7" fill="#43c26a"/><rect x="473.00" y="180.3" width="1.2" height=".9" fill="#8fe3a3"/><rect x="473.40" y="183.3" width="1.4" height=".9" fill="#8fe3a3"/><rect x="473.60" y="190.5" width="6.0" height=".9" fill="#8fe3a3"/><rect x="481.10" y="178.7" width="9.90" height="17.5" fill="#2db556"/><rect x="490.00" y="178.7" width=".8" height="17.5" fill="#52cb77"/><rect x="481.30" y="178.7" width="9.50" height=".7" fill="#43c26a"/><rect x="482.50" y="180.3" width="1.2" height=".9" fill="#8fe3a3"/><rect x="482.90" y="183.3" width="1.4" height=".9" fill="#8fe3a3"/><rect x="483.10" y="190.5" width="6.0" height=".9" fill="#8fe3a3"/><rect x="490.60" y="178.7" width="9.90" height="17.5" fill="#2db556"/><rect x="499.50" y="178.7" width=".8" height="17.5" fill="#52cb77"/><rect x="490.80" y="178.7" width="9.50" height=".7" fill="#43c26a"/><rect x="492.00" y="180.3" width="1.2" height=".9" fill="#8fe3a3"/><rect x="492.40" y="183.3" width="1.4" height=".9" fill="#8fe3a3"/><rect x="492.60" y="190.5" width="6.0" height=".9" fill="#8fe3a3"/><rect x="500.10" y="178.7" width="9.90" height="17.5" fill="#2db556"/><rect x="509.00" y="178.7" width=".8" height="17.5" fill="#52cb77"/><rect x="500.30" y="178.7" width="9.50" height=".7" fill="#43c26a"/><rect x="501.50" y="180.3" width="1.2" height=".9" fill="#8fe3a3"/><rect x="501.90" y="183.3" width="1.4" height=".9" fill="#8fe3a3"/><rect x="502.10" y="190.5" width="6.0" height=".9" fill="#8fe3a3"/><rect x="509.60" y="178.7" width="9.90" height="17.5" fill="#2db556"/><rect x="518.50" y="178.7" width=".8" height="17.5" fill="#52cb77"/><rect x="509.80" y="178.7" width="9.50" height=".7" fill="#43c26a"/><rect x="511.00" y="180.3" width="1.2" height=".9" fill="#8fe3a3"/><rect x="511.40" y="183.3" width="1.4" height=".9" fill="#8fe3a3"/><rect x="511.60" y="190.5" width="6.0" height=".9" fill="#8fe3a3"/><rect x="519.10" y="178.7" width="9.90" height="17.5" fill="#2db556"/><rect x="528.00" y="178.7" width=".8" height="17.5" fill="#52cb77"/><rect x="519.30" y="178.7" width="9.50" height=".7" fill="#43c26a"/><rect x="520.50" y="180.3" width="1.2" height=".9" fill="#8fe3a3"/><rect x="520.90" y="183.3" width="1.4" height=".9" fill="#8fe3a3"/><rect x="521.10" y="190.5" width="6.0" height=".9" fill="#8fe3a3"/><rect x="528.60" y="178.7" width="76.40" height="17.5" fill="#2db556"/><rect x="604.00" y="178.7" width=".8" height="17.5" fill="#52cb77"/><rect x="528.80" y="178.7" width="76.00" height=".7" fill="#43c26a"/><rect x="537.80" y="179.5" width="1" height="1.2" fill="#1f8a40"/><rect x="537.80" y="194.1" width="1" height="1.2" fill="#1f8a40"/><rect x="547.30" y="179.5" width="1" height="1.2" fill="#1f8a40"/><rect x="547.30" y="194.1" width="1" height="1.2" fill="#1f8a40"/><rect x="556.80" y="179.5" width="1" height="1.2" fill="#1f8a40"/><rect x="556.80" y="194.1" width="1" height="1.2" fill="#1f8a40"/><rect x="566.30" y="179.5" width="1" height="1.2" fill="#1f8a40"/><rect x="566.30" y="194.1" width="1" height="1.2" fill="#1f8a40"/><rect x="575.80" y="179.5" width="1" height="1.2" fill="#1f8a40"/><rect x="575.80" y="194.1" width="1" height="1.2" fill="#1f8a40"/><rect x="585.30" y="179.5" width="1" height="1.2" fill="#1f8a40"/><rect x="585.30" y="194.1" width="1" height="1.2" fill="#1f8a40"/><rect x="594.80" y="179.5" width="1" height="1.2" fill="#1f8a40"/><rect x="594.80" y="194.1" width="1" height="1.2" fill="#1f8a40"/><rect x="594.80" y="187.3" width="9.5" height=".9" fill="#8fe3a3"/><rect x="586.80" y="180.2" width="18.0" height=".9" fill="#8fe3a3"/><rect x="604.60" y="178.7" width="76.40" height="17.5" fill="#2db556"/><rect x="680.00" y="178.7" width=".8" height="17.5" fill="#52cb77"/><rect x="604.80" y="178.7" width="76.00" height=".7" fill="#43c26a"/><rect x="613.80" y="179.5" width="1" height="1.2" fill="#1f8a40"/><rect x="613.80" y="194.1" width="1" height="1.2" fill="#1f8a40"/><rect x="623.30" y="179.5" width="1" height="1.2" fill="#1f8a40"/><rect x="623.30" y="194.1" width="1" height="1.2" fill="#1f8a40"/><rect x="632.80" y="179.5" width="1" height="1.2" fill="#1f8a40"/><rect x="632.80" y="194.1" width="1" height="1.2" fill="#1f8a40"/><rect x="642.30" y="179.5" width="1" height="1.2" fill="#1f8a40"/><rect x="642.30" y="194.1" width="1" height="1.2" fill="#1f8a40"/><rect x="651.80" y="179.5" width="1" height="1.2" fill="#1f8a40"/><rect x="651.80" y="194.1" width="1" height="1.2" fill="#1f8a40"/><rect x="661.30" y="179.5" width="1" height="1.2" fill="#1f8a40"/><rect x="661.30" y="194.1" width="1" height="1.2" fill="#1f8a40"/><rect x="670.80" y="179.5" width="1" height="1.2" fill="#1f8a40"/><rect x="670.80" y="194.1" width="1" height="1.2" fill="#1f8a40"/><rect x="605.80" y="182.3" width="19.0" height=".9" fill="#8fe3a3"/><rect x="624.30" y="187.3" width="19.5" height=".9" fill="#8fe3a3"/><rect x="643.30" y="192.2" width="19.5" height=".9" fill="#8fe3a3"/><rect x="662.80" y="180.2" width="18.0" height=".9" fill="#8fe3a3"/><rect x="452.60" y="197.8" width="9.90" height="17.5" fill="#2db556"/><rect x="461.50" y="197.8" width=".8" height="17.5" fill="#52cb77"/><rect x="452.80" y="197.8" width="9.50" height=".7" fill="#43c26a"/><rect x="454.00" y="199.3" width="1.2" height=".9" fill="#8fe3a3"/><rect x="454.40" y="202.3" width="1.4" height=".9" fill="#8fe3a3"/><rect x="454.60" y="209.6" width="6.0" height=".9" fill="#8fe3a3"/><rect x="462.10" y="197.8" width="9.90" height="17.5" fill="#2db556"/><rect x="471.00" y="197.8" width=".8" height="17.5" fill="#52cb77"/><rect x="462.30" y="197.8" width="9.50" height=".7" fill="#43c26a"/><rect x="463.50" y="199.3" width="1.2" height=".9" fill="#8fe3a3"/><rect x="463.90" y="202.3" width="1.4" height=".9" fill="#8fe3a3"/><rect x="464.10" y="209.6" width="6.0" height=".9" fill="#8fe3a3"/><rect x="471.60" y="197.8" width="9.90" height="17.5" fill="#2db556"/><rect x="480.50" y="197.8" width=".8" height="17.5" fill="#52cb77"/><rect x="471.80" y="197.8" width="9.50" height=".7" fill="#43c26a"/><rect x="473.00" y="199.3" width="1.2" height=".9" fill="#8fe3a3"/><rect x="473.40" y="202.3" width="1.4" height=".9" fill="#8fe3a3"/><rect x="473.60" y="209.6" width="6.0" height=".9" fill="#8fe3a3"/><rect x="481.10" y="197.8" width="9.90" height="17.5" fill="#2db556"/><rect x="490.00" y="197.8" width=".8" height="17.5" fill="#52cb77"/><rect x="481.30" y="197.8" width="9.50" height=".7" fill="#43c26a"/><rect x="482.50" y="199.3" width="1.2" height=".9" fill="#8fe3a3"/><rect x="482.90" y="202.3" width="1.4" height=".9" fill="#8fe3a3"/><rect x="483.10" y="209.6" width="6.0" height=".9" fill="#8fe3a3"/><rect x="490.60" y="197.8" width="9.90" height="17.5" fill="#2db556"/><rect x="499.50" y="197.8" width=".8" height="17.5" fill="#52cb77"/><rect x="490.80" y="197.8" width="9.50" height=".7" fill="#43c26a"/><rect x="492.00" y="199.3" width="1.2" height=".9" fill="#8fe3a3"/><rect x="492.40" y="202.3" width="1.4" height=".9" fill="#8fe3a3"/><rect x="492.60" y="209.6" width="6.0" height=".9" fill="#8fe3a3"/><rect x="500.10" y="197.8" width="9.90" height="17.5" fill="#2db556"/><rect x="509.00" y="197.8" width=".8" height="17.5" fill="#52cb77"/><rect x="500.30" y="197.8" width="9.50" height=".7" fill="#43c26a"/><rect x="501.50" y="199.3" width="1.2" height=".9" fill="#8fe3a3"/><rect x="501.90" y="202.3" width="1.4" height=".9" fill="#8fe3a3"/><rect x="502.10" y="209.6" width="6.0" height=".9" fill="#8fe3a3"/><rect x="509.60" y="197.8" width="9.90" height="17.5" fill="#2db556"/><rect x="518.50" y="197.8" width=".8" height="17.5" fill="#52cb77"/><rect x="509.80" y="197.8" width="9.50" height=".7" fill="#43c26a"/><rect x="511.00" y="199.3" width="1.2" height=".9" fill="#8fe3a3"/><rect x="511.40" y="202.3" width="1.4" height=".9" fill="#8fe3a3"/><rect x="511.60" y="209.6" width="6.0" height=".9" fill="#8fe3a3"/><rect x="519.10" y="197.8" width="9.90" height="17.5" fill="#2db556"/><rect x="528.00" y="197.8" width=".8" height="17.5" fill="#52cb77"/><rect x="519.30" y="197.8" width="9.50" height=".7" fill="#43c26a"/><rect x="520.50" y="199.3" width="1.2" height=".9" fill="#8fe3a3"/><rect x="520.90" y="202.3" width="1.4" height=".9" fill="#8fe3a3"/><rect x="521.10" y="209.6" width="6.0" height=".9" fill="#8fe3a3"/><rect x="196.01" y="216.8" width="9.99" height="17.5" fill="#2db556"/><rect x="205.00" y="216.8" width=".8" height="17.5" fill="#52cb77"/><rect x="196.21" y="216.8" width="9.59" height=".7" fill="#43c26a"/><rect x="198.41" y="222.2" width="1.2" height=".9" fill="#8fe3a3"/><rect x="200.61" y="223.2" width="1.2" height=".9" fill="#8fe3a3"/><rect x="197.41" y="225.4" width="2.4" height=".9" fill="#8fe3a3"/><rect x="201.41" y="225.4" width="2.4" height=".9" fill="#8fe3a3"/><rect x="205.60" y="216.8" width="9.90" height="17.5" fill="#2db556"/><rect x="214.50" y="216.8" width=".8" height="17.5" fill="#52cb77"/><rect x="205.80" y="216.8" width="9.50" height=".7" fill="#43c26a"/><rect x="208.00" y="222.2" width="1.2" height=".9" fill="#8fe3a3"/><rect x="210.20" y="223.2" width="1.2" height=".9" fill="#8fe3a3"/><rect x="207.00" y="225.4" width="2.4" height=".9" fill="#8fe3a3"/><rect x="211.00" y="225.4" width="2.4" height=".9" fill="#8fe3a3"/><rect x="215.10" y="216.8" width="9.90" height="17.5" fill="#2db556"/><rect x="224.00" y="216.8" width=".8" height="17.5" fill="#52cb77"/><rect x="215.30" y="216.8" width="9.50" height=".7" fill="#43c26a"/><rect x="217.70" y="231.2" width="1.2" height=".9" fill="#8fe3a3"/><rect x="218.90" y="230.2" width="1.6" height=".9" fill="#8fe3a3"/><rect x="220.50" y="231.2" width="1.2" height=".9" fill="#8fe3a3"/><rect x="224.60" y="216.8" width="76.40" height="17.5" fill="#2db556"/><rect x="300.00" y="216.8" width=".8" height="17.5" fill="#52cb77"/><rect x="224.80" y="216.8" width="76.00" height=".7" fill="#43c26a"/><rect x="233.80" y="217.6" width="1" height="1.2" fill="#1f8a40"/><rect x="233.80" y="232.2" width="1" height="1.2" fill="#1f8a40"/><rect x="243.30" y="217.6" width="1" height="1.2" fill="#1f8a40"/><rect x="243.30" y="232.2" width="1" height="1.2" fill="#1f8a40"/><rect x="252.80" y="217.6" width="1" height="1.2" fill="#1f8a40"/><rect x="252.80" y="232.2" width="1" height="1.2" fill="#1f8a40"/><rect x="262.30" y="217.6" width="1" height="1.2" fill="#1f8a40"/><rect x="262.30" y="232.2" width="1" height="1.2" fill="#1f8a40"/><rect x="271.80" y="217.6" width="1" height="1.2" fill="#1f8a40"/><rect x="271.80" y="232.2" width="1" height="1.2" fill="#1f8a40"/><rect x="281.30" y="217.6" width="1" height="1.2" fill="#1f8a40"/><rect x="281.30" y="232.2" width="1" height="1.2" fill="#1f8a40"/><rect x="290.80" y="217.6" width="1" height="1.2" fill="#1f8a40"/><rect x="290.80" y="232.2" width="1" height="1.2" fill="#1f8a40"/><rect x="225.80" y="220.4" width="19.0" height=".9" fill="#8fe3a3"/><rect x="244.30" y="225.4" width="19.5" height=".9" fill="#8fe3a3"/><rect x="263.30" y="230.3" width="19.5" height=".9" fill="#8fe3a3"/><rect x="282.80" y="218.3" width="18.0" height=".9" fill="#8fe3a3"/><rect x="300.60" y="216.8" width="76.40" height="17.5" fill="#2db556"/><rect x="376.00" y="216.8" width=".8" height="17.5" fill="#52cb77"/><rect x="300.80" y="216.8" width="76.00" height=".7" fill="#43c26a"/><rect x="309.80" y="217.6" width="1" height="1.2" fill="#1f8a40"/><rect x="309.80" y="232.2" width="1" height="1.2" fill="#1f8a40"/><rect x="319.30" y="217.6" width="1" height="1.2" fill="#1f8a40"/><rect x="319.30" y="232.2" width="1" height="1.2" fill="#1f8a40"/><rect x="328.80" y="217.6" width="1" height="1.2" fill="#1f8a40"/><rect x="328.80" y="232.2" width="1" height="1.2" fill="#1f8a40"/><rect x="338.30" y="217.6" width="1" height="1.2" fill="#1f8a40"/><rect x="338.30" y="232.2" width="1" height="1.2" fill="#1f8a40"/><rect x="347.80" y="217.6" width="1" height="1.2" fill="#1f8a40"/><rect x="347.80" y="232.2" width="1" height="1.2" fill="#1f8a40"/><rect x="357.30" y="217.6" width="1" height="1.2" fill="#1f8a40"/><rect x="357.30" y="232.2" width="1" height="1.2" fill="#1f8a40"/><rect x="366.80" y="217.6" width="1" height="1.2" fill="#1f8a40"/><rect x="366.80" y="232.2" width="1" height="1.2" fill="#1f8a40"/><rect x="301.80" y="220.4" width="19.0" height=".9" fill="#8fe3a3"/><rect x="320.30" y="225.4" width="19.5" height=".9" fill="#8fe3a3"/><rect x="339.30" y="230.3" width="19.5" height=".9" fill="#8fe3a3"/><rect x="358.80" y="218.3" width="18.0" height=".9" fill="#8fe3a3"/><rect x="414.60" y="216.8" width="9.90" height="17.5" fill="#2db556"/><rect x="423.50" y="216.8" width=".8" height="17.5" fill="#52cb77"/><rect x="414.80" y="216.8" width="9.50" height=".7" fill="#43c26a"/><rect x="415.80" y="230.8" width="1.0" height=".9" fill="#8fe3a3"/><rect x="424.10" y="216.8" width="9.90" height="17.5" fill="#2db556"/><rect x="433.00" y="216.8" width=".8" height="17.5" fill="#52cb77"/><rect x="424.30" y="216.8" width="9.50" height=".7" fill="#43c26a"/><rect x="425.30" y="230.8" width="1.0" height=".9" fill="#8fe3a3"/><rect x="433.60" y="216.8" width="9.90" height="17.5" fill="#2db556"/><rect x="442.50" y="216.8" width=".8" height="17.5" fill="#52cb77"/><rect x="433.80" y="216.8" width="9.50" height=".7" fill="#43c26a"/><rect x="434.80" y="230.8" width="1.0" height=".9" fill="#8fe3a3"/><rect x="452.60" y="216.8" width="9.90" height="17.5" fill="#2db556"/><rect x="461.50" y="216.8" width=".8" height="17.5" fill="#52cb77"/><rect x="452.80" y="216.8" width="9.50" height=".7" fill="#43c26a"/><rect x="454.00" y="218.4" width="1.2" height=".9" fill="#8fe3a3"/><rect x="454.40" y="221.4" width="1.4" height=".9" fill="#8fe3a3"/><rect x="454.60" y="228.6" width="6.0" height=".9" fill="#8fe3a3"/><rect x="462.10" y="216.8" width="9.90" height="17.5" fill="#2db556"/><rect x="471.00" y="216.8" width=".8" height="17.5" fill="#52cb77"/><rect x="462.30" y="216.8" width="9.50" height=".7" fill="#43c26a"/><rect x="463.50" y="218.4" width="1.2" height=".9" fill="#8fe3a3"/><rect x="463.90" y="221.4" width="1.4" height=".9" fill="#8fe3a3"/><rect x="464.10" y="228.6" width="6.0" height=".9" fill="#8fe3a3"/><rect x="471.60" y="216.8" width="9.90" height="17.5" fill="#2db556"/><rect x="480.50" y="216.8" width=".8" height="17.5" fill="#52cb77"/><rect x="471.80" y="216.8" width="9.50" height=".7" fill="#43c26a"/><rect x="473.00" y="218.4" width="1.2" height=".9" fill="#8fe3a3"/><rect x="473.40" y="221.4" width="1.4" height=".9" fill="#8fe3a3"/><rect x="473.60" y="228.6" width="6.0" height=".9" fill="#8fe3a3"/><rect x="481.10" y="216.8" width="9.90" height="17.5" fill="#2db556"/><rect x="490.00" y="216.8" width=".8" height="17.5" fill="#52cb77"/><rect x="481.30" y="216.8" width="9.50" height=".7" fill="#43c26a"/><rect x="482.50" y="218.4" width="1.2" height=".9" fill="#8fe3a3"/><rect x="482.90" y="221.4" width="1.4" height=".9" fill="#8fe3a3"/><rect x="483.10" y="228.6" width="6.0" height=".9" fill="#8fe3a3"/><rect x="490.60" y="216.8" width="9.90" height="17.5" fill="#2db556"/><rect x="499.50" y="216.8" width=".8" height="17.5" fill="#52cb77"/><rect x="490.80" y="216.8" width="9.50" height=".7" fill="#43c26a"/><rect x="492.00" y="218.4" width="1.2" height=".9" fill="#8fe3a3"/><rect x="492.40" y="221.4" width="1.4" height=".9" fill="#8fe3a3"/><rect x="492.60" y="228.6" width="6.0" height=".9" fill="#8fe3a3"/><rect x="500.10" y="216.8" width="9.90" height="17.5" fill="#2db556"/><rect x="509.00" y="216.8" width=".8" height="17.5" fill="#52cb77"/><rect x="500.30" y="216.8" width="9.50" height=".7" fill="#43c26a"/><rect x="501.50" y="218.4" width="1.2" height=".9" fill="#8fe3a3"/><rect x="501.90" y="221.4" width="1.4" height=".9" fill="#8fe3a3"/><rect x="502.10" y="228.6" width="6.0" height=".9" fill="#8fe3a3"/><rect x="509.60" y="216.8" width="9.90" height="17.5" fill="#2db556"/><rect x="518.50" y="216.8" width=".8" height="17.5" fill="#52cb77"/><rect x="509.80" y="216.8" width="9.50" height=".7" fill="#43c26a"/><rect x="511.00" y="218.4" width="1.2" height=".9" fill="#8fe3a3"/><rect x="511.40" y="221.4" width="1.4" height=".9" fill="#8fe3a3"/><rect x="511.60" y="228.6" width="6.0" height=".9" fill="#8fe3a3"/><rect x="519.10" y="216.8" width="9.90" height="17.5" fill="#2db556"/><rect x="528.00" y="216.8" width=".8" height="17.5" fill="#52cb77"/><rect x="519.30" y="216.8" width="9.50" height=".7" fill="#43c26a"/><rect x="520.50" y="218.4" width="1.2" height=".9" fill="#8fe3a3"/><rect x="520.90" y="221.4" width="1.4" height=".9" fill="#8fe3a3"/><rect x="521.10" y="228.6" width="6.0" height=".9" fill="#8fe3a3"/><rect x="528.60" y="216.8" width="76.40" height="17.5" fill="#2db556"/><rect x="604.00" y="216.8" width=".8" height="17.5" fill="#52cb77"/><rect x="528.80" y="216.8" width="76.00" height=".7" fill="#43c26a"/><rect x="537.80" y="217.6" width="1" height="1.2" fill="#1f8a40"/><rect x="537.80" y="232.2" width="1" height="1.2" fill="#1f8a40"/><rect x="547.30" y="217.6" width="1" height="1.2" fill="#1f8a40"/><rect x="547.30" y="232.2" width="1" height="1.2" fill="#1f8a40"/><rect x="556.80" y="217.6" width="1" height="1.2" fill="#1f8a40"/><rect x="556.80" y="232.2" width="1" height="1.2" fill="#1f8a40"/><rect x="566.30" y="217.6" width="1" height="1.2" fill="#1f8a40"/><rect x="566.30" y="232.2" width="1" height="1.2" fill="#1f8a40"/><rect x="575.80" y="217.6" width="1" height="1.2" fill="#1f8a40"/><rect x="575.80" y="232.2" width="1" height="1.2" fill="#1f8a40"/><rect x="585.30" y="217.6" width="1" height="1.2" fill="#1f8a40"/><rect x="585.30" y="232.2" width="1" height="1.2" fill="#1f8a40"/><rect x="594.80" y="217.6" width="1" height="1.2" fill="#1f8a40"/><rect x="594.80" y="232.2" width="1" height="1.2" fill="#1f8a40"/><rect x="529.80" y="220.4" width="19.0" height=".9" fill="#8fe3a3"/><rect x="548.30" y="225.4" width="19.5" height=".9" fill="#8fe3a3"/><rect x="567.30" y="230.3" width="19.5" height=".9" fill="#8fe3a3"/><rect x="586.80" y="218.3" width="18.0" height=".9" fill="#8fe3a3"/><rect x="604.60" y="216.8" width="76.40" height="17.5" fill="#2db556"/><rect x="680.00" y="216.8" width=".8" height="17.5" fill="#52cb77"/><rect x="604.80" y="216.8" width="76.00" height=".7" fill="#43c26a"/><rect x="613.80" y="217.6" width="1" height="1.2" fill="#1f8a40"/><rect x="613.80" y="232.2" width="1" height="1.2" fill="#1f8a40"/><rect x="623.30" y="217.6" width="1" height="1.2" fill="#1f8a40"/><rect x="623.30" y="232.2" width="1" height="1.2" fill="#1f8a40"/><rect x="632.80" y="217.6" width="1" height="1.2" fill="#1f8a40"/><rect x="632.80" y="232.2" width="1" height="1.2" fill="#1f8a40"/><rect x="642.30" y="217.6" width="1" height="1.2" fill="#1f8a40"/><rect x="642.30" y="232.2" width="1" height="1.2" fill="#1f8a40"/><rect x="651.80" y="217.6" width="1" height="1.2" fill="#1f8a40"/><rect x="651.80" y="232.2" width="1" height="1.2" fill="#1f8a40"/><rect x="661.30" y="217.6" width="1" height="1.2" fill="#1f8a40"/><rect x="661.30" y="232.2" width="1" height="1.2" fill="#1f8a40"/><rect x="670.80" y="217.6" width="1" height="1.2" fill="#1f8a40"/><rect x="670.80" y="232.2" width="1" height="1.2" fill="#1f8a40"/><rect x="605.80" y="220.4" width="19.0" height=".9" fill="#8fe3a3"/><rect x="624.30" y="225.4" width="19.5" height=".9" fill="#8fe3a3"/><rect x="643.30" y="230.3" width="19.5" height=".9" fill="#8fe3a3"/><rect x="662.80" y="218.3" width="18.0" height=".9" fill="#8fe3a3"/><rect x="196.01" y="235.8" width="9.99" height="17.5" fill="#2db556"/><rect x="205.00" y="235.8" width=".8" height="17.5" fill="#52cb77"/><rect x="196.21" y="235.8" width="9.59" height=".7" fill="#43c26a"/><rect x="197.41" y="238.8" width="2.0" height=".9" fill="#8fe3a3"/><rect x="201.61" y="238.8" width="2.0" height=".9" fill="#8fe3a3"/><rect x="197.41" y="243.8" width="2.0" height=".9" fill="#8fe3a3"/><rect x="201.61" y="243.8" width="2.0" height=".9" fill="#8fe3a3"/><rect x="197.41" y="248.8" width="2.0" height=".9" fill="#8fe3a3"/><rect x="201.61" y="248.8" width="2.0" height=".9" fill="#8fe3a3"/><rect x="205.60" y="235.8" width="9.90" height="17.5" fill="#2db556"/><rect x="214.50" y="235.8" width=".8" height="17.5" fill="#52cb77"/><rect x="205.80" y="235.8" width="9.50" height=".7" fill="#43c26a"/><rect x="207.00" y="238.8" width="2.0" height=".9" fill="#8fe3a3"/><rect x="211.20" y="238.8" width="2.0" height=".9" fill="#8fe3a3"/><rect x="207.00" y="243.8" width="2.0" height=".9" fill="#8fe3a3"/><rect x="211.20" y="243.8" width="2.0" height=".9" fill="#8fe3a3"/><rect x="207.00" y="248.8" width="2.0" height=".9" fill="#8fe3a3"/><rect x="211.20" y="248.8" width="2.0" height=".9" fill="#8fe3a3"/><rect x="224.60" y="235.8" width="9.90" height="17.5" fill="#2db556"/><rect x="233.50" y="235.8" width=".8" height="17.5" fill="#52cb77"/><rect x="224.80" y="235.8" width="9.50" height=".7" fill="#43c26a"/><rect x="225.80" y="237.5" width="7.4" height=".9" fill="#8fe3a3"/><rect x="226.80" y="244.6" width="1.4" height=".9" fill="#8fe3a3"/><rect x="230.40" y="244.6" width="1.4" height=".9" fill="#8fe3a3"/><rect x="226.00" y="247.6" width="2.6" height=".9" fill="#8fe3a3"/><rect x="230.20" y="247.6" width="2.6" height=".9" fill="#8fe3a3"/><rect x="234.10" y="235.8" width="9.90" height="17.5" fill="#2db556"/><rect x="243.00" y="235.8" width=".8" height="17.5" fill="#52cb77"/><rect x="234.30" y="235.8" width="9.50" height=".7" fill="#43c26a"/><rect x="235.30" y="237.5" width="7.4" height=".9" fill="#8fe3a3"/><rect x="236.30" y="244.6" width="1.4" height=".9" fill="#8fe3a3"/><rect x="239.90" y="244.6" width="1.4" height=".9" fill="#8fe3a3"/><rect x="235.50" y="247.6" width="2.6" height=".9" fill="#8fe3a3"/><rect x="239.70" y="247.6" width="2.6" height=".9" fill="#8fe3a3"/><rect x="243.60" y="235.8" width="9.90" height="17.5" fill="#2db556"/><rect x="252.50" y="235.8" width=".8" height="17.5" fill="#52cb77"/><rect x="243.80" y="235.8" width="9.50" height=".7" fill="#43c26a"/><rect x="244.80" y="237.5" width="7.4" height=".9" fill="#8fe3a3"/><rect x="245.80" y="244.6" width="1.4" height=".9" fill="#8fe3a3"/><rect x="249.40" y="244.6" width="1.4" height=".9" fill="#8fe3a3"/><rect x="245.00" y="247.6" width="2.6" height=".9" fill="#8fe3a3"/><rect x="249.20" y="247.6" width="2.6" height=".9" fill="#8fe3a3"/><rect x="253.10" y="235.8" width="9.90" height="17.5" fill="#2db556"/><rect x="262.00" y="235.8" width=".8" height="17.5" fill="#52cb77"/><rect x="253.30" y="235.8" width="9.50" height=".7" fill="#43c26a"/><rect x="254.30" y="237.5" width="7.4" height=".9" fill="#8fe3a3"/><rect x="255.30" y="244.6" width="1.4" height=".9" fill="#8fe3a3"/><rect x="258.90" y="244.6" width="1.4" height=".9" fill="#8fe3a3"/><rect x="254.50" y="247.6" width="2.6" height=".9" fill="#8fe3a3"/><rect x="258.70" y="247.6" width="2.6" height=".9" fill="#8fe3a3"/><rect x="262.60" y="235.8" width="9.90" height="17.5" fill="#2db556"/><rect x="271.50" y="235.8" width=".8" height="17.5" fill="#52cb77"/><rect x="262.80" y="235.8" width="9.50" height=".7" fill="#43c26a"/><rect x="263.80" y="237.5" width="7.4" height=".9" fill="#8fe3a3"/><rect x="264.80" y="244.6" width="1.4" height=".9" fill="#8fe3a3"/><rect x="268.40" y="244.6" width="1.4" height=".9" fill="#8fe3a3"/><rect x="264.00" y="247.6" width="2.6" height=".9" fill="#8fe3a3"/><rect x="268.20" y="247.6" width="2.6" height=".9" fill="#8fe3a3"/><rect x="272.10" y="235.8" width="9.90" height="17.5" fill="#2db556"/><rect x="281.00" y="235.8" width=".8" height="17.5" fill="#52cb77"/><rect x="272.30" y="235.8" width="9.50" height=".7" fill="#43c26a"/><rect x="273.30" y="237.5" width="7.4" height=".9" fill="#8fe3a3"/><rect x="274.30" y="244.6" width="1.4" height=".9" fill="#8fe3a3"/><rect x="277.90" y="244.6" width="1.4" height=".9" fill="#8fe3a3"/><rect x="273.50" y="247.6" width="2.6" height=".9" fill="#8fe3a3"/><rect x="277.70" y="247.6" width="2.6" height=".9" fill="#8fe3a3"/><rect x="281.60" y="235.8" width="9.90" height="17.5" fill="#2db556"/><rect x="290.50" y="235.8" width=".8" height="17.5" fill="#52cb77"/><rect x="281.80" y="235.8" width="9.50" height=".7" fill="#43c26a"/><rect x="282.80" y="237.5" width="7.4" height=".9" fill="#8fe3a3"/><rect x="283.80" y="244.6" width="1.4" height=".9" fill="#8fe3a3"/><rect x="287.40" y="244.6" width="1.4" height=".9" fill="#8fe3a3"/><rect x="283.00" y="247.6" width="2.6" height=".9" fill="#8fe3a3"/><rect x="287.20" y="247.6" width="2.6" height=".9" fill="#8fe3a3"/><rect x="291.10" y="235.8" width="9.90" height="17.5" fill="#2db556"/><rect x="300.00" y="235.8" width=".8" height="17.5" fill="#52cb77"/><rect x="291.30" y="235.8" width="9.50" height=".7" fill="#43c26a"/><rect x="292.30" y="237.5" width="7.4" height=".9" fill="#8fe3a3"/><rect x="293.30" y="244.6" width="1.4" height=".9" fill="#8fe3a3"/><rect x="296.90" y="244.6" width="1.4" height=".9" fill="#8fe3a3"/><rect x="292.50" y="247.6" width="2.6" height=".9" fill="#8fe3a3"/><rect x="296.70" y="247.6" width="2.6" height=".9" fill="#8fe3a3"/><rect x="300.60" y="235.8" width="9.90" height="17.5" fill="#2db556"/><rect x="309.50" y="235.8" width=".8" height="17.5" fill="#52cb77"/><rect x="300.80" y="235.8" width="9.50" height=".7" fill="#43c26a"/><rect x="301.80" y="237.5" width="7.4" height=".9" fill="#8fe3a3"/><rect x="302.80" y="244.6" width="1.4" height=".9" fill="#8fe3a3"/><rect x="306.40" y="244.6" width="1.4" height=".9" fill="#8fe3a3"/><rect x="302.00" y="247.6" width="2.6" height=".9" fill="#8fe3a3"/><rect x="306.20" y="247.6" width="2.6" height=".9" fill="#8fe3a3"/><rect x="310.10" y="235.8" width="9.90" height="17.5" fill="#2db556"/><rect x="319.00" y="235.8" width=".8" height="17.5" fill="#52cb77"/><rect x="310.30" y="235.8" width="9.50" height=".7" fill="#43c26a"/><rect x="311.30" y="237.5" width="7.4" height=".9" fill="#8fe3a3"/><rect x="312.30" y="244.6" width="1.4" height=".9" fill="#8fe3a3"/><rect x="315.90" y="244.6" width="1.4" height=".9" fill="#8fe3a3"/><rect x="311.50" y="247.6" width="2.6" height=".9" fill="#8fe3a3"/><rect x="315.70" y="247.6" width="2.6" height=".9" fill="#8fe3a3"/><rect x="319.60" y="235.8" width="9.90" height="17.5" fill="#2db556"/><rect x="328.50" y="235.8" width=".8" height="17.5" fill="#52cb77"/><rect x="319.80" y="235.8" width="9.50" height=".7" fill="#43c26a"/><rect x="320.80" y="237.5" width="7.4" height=".9" fill="#8fe3a3"/><rect x="321.80" y="244.6" width="1.4" height=".9" fill="#8fe3a3"/><rect x="325.40" y="244.6" width="1.4" height=".9" fill="#8fe3a3"/><rect x="321.00" y="247.6" width="2.6" height=".9" fill="#8fe3a3"/><rect x="325.20" y="247.6" width="2.6" height=".9" fill="#8fe3a3"/><rect x="329.10" y="235.8" width="9.90" height="17.5" fill="#2db556"/><rect x="338.00" y="235.8" width=".8" height="17.5" fill="#52cb77"/><rect x="329.30" y="235.8" width="9.50" height=".7" fill="#43c26a"/><rect x="330.30" y="237.5" width="7.4" height=".9" fill="#8fe3a3"/><rect x="331.30" y="244.6" width="1.4" height=".9" fill="#8fe3a3"/><rect x="334.90" y="244.6" width="1.4" height=".9" fill="#8fe3a3"/><rect x="330.50" y="247.6" width="2.6" height=".9" fill="#8fe3a3"/><rect x="334.70" y="247.6" width="2.6" height=".9" fill="#8fe3a3"/><rect x="338.60" y="235.8" width="9.90" height="17.5" fill="#2db556"/><rect x="347.50" y="235.8" width=".8" height="17.5" fill="#52cb77"/><rect x="338.80" y="235.8" width="9.50" height=".7" fill="#43c26a"/><rect x="339.80" y="237.5" width="7.4" height=".9" fill="#8fe3a3"/><rect x="340.80" y="244.6" width="1.4" height=".9" fill="#8fe3a3"/><rect x="344.40" y="244.6" width="1.4" height=".9" fill="#8fe3a3"/><rect x="340.00" y="247.6" width="2.6" height=".9" fill="#8fe3a3"/><rect x="344.20" y="247.6" width="2.6" height=".9" fill="#8fe3a3"/><rect x="348.10" y="235.8" width="9.90" height="17.5" fill="#2db556"/><rect x="357.00" y="235.8" width=".8" height="17.5" fill="#52cb77"/><rect x="348.30" y="235.8" width="9.50" height=".7" fill="#43c26a"/><rect x="349.30" y="237.5" width="7.4" height=".9" fill="#8fe3a3"/><rect x="350.30" y="244.6" width="1.4" height=".9" fill="#8fe3a3"/><rect x="353.90" y="244.6" width="1.4" height=".9" fill="#8fe3a3"/><rect x="349.50" y="247.6" width="2.6" height=".9" fill="#8fe3a3"/><rect x="353.70" y="247.6" width="2.6" height=".9" fill="#8fe3a3"/><rect x="357.60" y="235.8" width="9.90" height="17.5" fill="#2db556"/><rect x="366.50" y="235.8" width=".8" height="17.5" fill="#52cb77"/><rect x="357.80" y="235.8" width="9.50" height=".7" fill="#43c26a"/><rect x="358.80" y="237.5" width="7.4" height=".9" fill="#8fe3a3"/><rect x="359.80" y="244.6" width="1.4" height=".9" fill="#8fe3a3"/><rect x="363.40" y="244.6" width="1.4" height=".9" fill="#8fe3a3"/><rect x="359.00" y="247.6" width="2.6" height=".9" fill="#8fe3a3"/><rect x="363.20" y="247.6" width="2.6" height=".9" fill="#8fe3a3"/><rect x="367.10" y="235.8" width="9.90" height="17.5" fill="#2db556"/><rect x="376.00" y="235.8" width=".8" height="17.5" fill="#52cb77"/><rect x="367.30" y="235.8" width="9.50" height=".7" fill="#43c26a"/><rect x="368.30" y="237.5" width="7.4" height=".9" fill="#8fe3a3"/><rect x="369.30" y="244.6" width="1.4" height=".9" fill="#8fe3a3"/><rect x="372.90" y="244.6" width="1.4" height=".9" fill="#8fe3a3"/><rect x="368.50" y="247.6" width="2.6" height=".9" fill="#8fe3a3"/><rect x="372.70" y="247.6" width="2.6" height=".9" fill="#8fe3a3"/><rect x="376.80" y="235.8" width="9.50" height="17.5" fill="#40444f"/><rect x="385.60" y="235.8" width=".7" height="17.5" fill="#363a44"/><rect x="414.60" y="235.8" width="9.90" height="17.5" fill="#2db556"/><rect x="423.50" y="235.8" width=".8" height="17.5" fill="#52cb77"/><rect x="414.80" y="235.8" width="9.50" height=".7" fill="#43c26a"/><rect x="415.80" y="249.8" width="1.0" height=".9" fill="#8fe3a3"/><rect x="424.10" y="235.8" width="9.90" height="17.5" fill="#2db556"/><rect x="433.00" y="235.8" width=".8" height="17.5" fill="#52cb77"/><rect x="424.30" y="235.8" width="9.50" height=".7" fill="#43c26a"/><rect x="425.30" y="249.8" width="1.0" height=".9" fill="#8fe3a3"/><rect x="433.60" y="235.8" width="9.90" height="17.5" fill="#2db556"/><rect x="442.50" y="235.8" width=".8" height="17.5" fill="#52cb77"/><rect x="433.80" y="235.8" width="9.50" height=".7" fill="#43c26a"/><rect x="434.80" y="249.8" width="1.0" height=".9" fill="#8fe3a3"/><rect x="452.60" y="235.8" width="9.90" height="17.5" fill="#2db556"/><rect x="461.50" y="235.8" width=".8" height="17.5" fill="#52cb77"/><rect x="452.80" y="235.8" width="9.50" height=".7" fill="#43c26a"/><rect x="453.80" y="241.2" width="7.0" height=".9" fill="#8fe3a3"/><rect x="454.00" y="251.8" width="1.2" height=".9" fill="#8fe3a3"/><rect x="459.30" y="251.8" width="1.2" height=".9" fill="#8fe3a3"/><rect x="462.10" y="235.8" width="9.90" height="17.5" fill="#2db556"/><rect x="471.00" y="235.8" width=".8" height="17.5" fill="#52cb77"/><rect x="462.30" y="235.8" width="9.50" height=".7" fill="#43c26a"/><rect x="463.30" y="241.2" width="7.0" height=".9" fill="#8fe3a3"/><rect x="463.50" y="251.8" width="1.2" height=".9" fill="#8fe3a3"/><rect x="468.80" y="251.8" width="1.2" height=".9" fill="#8fe3a3"/><rect x="471.60" y="235.8" width="9.90" height="17.5" fill="#2db556"/><rect x="480.50" y="235.8" width=".8" height="17.5" fill="#52cb77"/><rect x="471.80" y="235.8" width="9.50" height=".7" fill="#43c26a"/><rect x="472.80" y="241.2" width="7.0" height=".9" fill="#8fe3a3"/><rect x="473.00" y="251.8" width="1.2" height=".9" fill="#8fe3a3"/><rect x="478.30" y="251.8" width="1.2" height=".9" fill="#8fe3a3"/><rect x="481.10" y="235.8" width="9.90" height="17.5" fill="#2db556"/><rect x="490.00" y="235.8" width=".8" height="17.5" fill="#52cb77"/><rect x="481.30" y="235.8" width="9.50" height=".7" fill="#43c26a"/><rect x="482.30" y="241.2" width="7.0" height=".9" fill="#8fe3a3"/><rect x="482.50" y="251.8" width="1.2" height=".9" fill="#8fe3a3"/><rect x="487.80" y="251.8" width="1.2" height=".9" fill="#8fe3a3"/><rect x="490.60" y="235.8" width="9.90" height="17.5" fill="#2db556"/><rect x="499.50" y="235.8" width=".8" height="17.5" fill="#52cb77"/><rect x="490.80" y="235.8" width="9.50" height=".7" fill="#43c26a"/><rect x="491.80" y="241.2" width="7.0" height=".9" fill="#8fe3a3"/><rect x="492.00" y="251.8" width="1.2" height=".9" fill="#8fe3a3"/><rect x="497.30" y="251.8" width="1.2" height=".9" fill="#8fe3a3"/><rect x="500.10" y="235.8" width="9.90" height="17.5" fill="#2db556"/><rect x="509.00" y="235.8" width=".8" height="17.5" fill="#52cb77"/><rect x="500.30" y="235.8" width="9.50" height=".7" fill="#43c26a"/><rect x="501.30" y="241.2" width="7.0" height=".9" fill="#8fe3a3"/><rect x="501.50" y="251.8" width="1.2" height=".9" fill="#8fe3a3"/><rect x="506.80" y="251.8" width="1.2" height=".9" fill="#8fe3a3"/><rect x="509.60" y="235.8" width="9.90" height="17.5" fill="#2db556"/><rect x="518.50" y="235.8" width=".8" height="17.5" fill="#52cb77"/><rect x="509.80" y="235.8" width="9.50" height=".7" fill="#43c26a"/><rect x="510.80" y="241.2" width="7.0" height=".9" fill="#8fe3a3"/><rect x="511.00" y="251.8" width="1.2" height=".9" fill="#8fe3a3"/><rect x="516.30" y="251.8" width="1.2" height=".9" fill="#8fe3a3"/><rect x="519.10" y="235.8" width="9.90" height="17.5" fill="#2db556"/><rect x="528.00" y="235.8" width=".8" height="17.5" fill="#52cb77"/><rect x="519.30" y="235.8" width="9.50" height=".7" fill="#43c26a"/><rect x="520.30" y="241.2" width="7.0" height=".9" fill="#8fe3a3"/><rect x="520.50" y="251.8" width="1.2" height=".9" fill="#8fe3a3"/><rect x="525.80" y="251.8" width="1.2" height=".9" fill="#8fe3a3"/><rect x="528.60" y="235.8" width="9.90" height="17.5" fill="#2db556"/><rect x="537.50" y="235.8" width=".8" height="17.5" fill="#52cb77"/><rect x="528.80" y="235.8" width="9.50" height=".7" fill="#43c26a"/><rect x="529.80" y="237.5" width="7.4" height=".9" fill="#8fe3a3"/><rect x="530.80" y="244.6" width="1.4" height=".9" fill="#8fe3a3"/><rect x="534.40" y="244.6" width="1.4" height=".9" fill="#8fe3a3"/><rect x="530.00" y="247.6" width="2.6" height=".9" fill="#8fe3a3"/><rect x="534.20" y="247.6" width="2.6" height=".9" fill="#8fe3a3"/><rect x="538.10" y="235.8" width="9.90" height="17.5" fill="#2db556"/><rect x="547.00" y="235.8" width=".8" height="17.5" fill="#52cb77"/><rect x="538.30" y="235.8" width="9.50" height=".7" fill="#43c26a"/><rect x="539.30" y="237.5" width="7.4" height=".9" fill="#8fe3a3"/><rect x="540.30" y="244.6" width="1.4" height=".9" fill="#8fe3a3"/><rect x="543.90" y="244.6" width="1.4" height=".9" fill="#8fe3a3"/><rect x="539.50" y="247.6" width="2.6" height=".9" fill="#8fe3a3"/><rect x="543.70" y="247.6" width="2.6" height=".9" fill="#8fe3a3"/><rect x="547.60" y="235.8" width="9.90" height="17.5" fill="#2db556"/><rect x="556.50" y="235.8" width=".8" height="17.5" fill="#52cb77"/><rect x="547.80" y="235.8" width="9.50" height=".7" fill="#43c26a"/><rect x="548.80" y="237.5" width="7.4" height=".9" fill="#8fe3a3"/><rect x="549.80" y="244.6" width="1.4" height=".9" fill="#8fe3a3"/><rect x="553.40" y="244.6" width="1.4" height=".9" fill="#8fe3a3"/><rect x="549.00" y="247.6" width="2.6" height=".9" fill="#8fe3a3"/><rect x="553.20" y="247.6" width="2.6" height=".9" fill="#8fe3a3"/><rect x="557.10" y="235.8" width="9.90" height="17.5" fill="#2db556"/><rect x="566.00" y="235.8" width=".8" height="17.5" fill="#52cb77"/><rect x="557.30" y="235.8" width="9.50" height=".7" fill="#43c26a"/><rect x="558.30" y="237.5" width="7.4" height=".9" fill="#8fe3a3"/><rect x="559.30" y="244.6" width="1.4" height=".9" fill="#8fe3a3"/><rect x="562.90" y="244.6" width="1.4" height=".9" fill="#8fe3a3"/><rect x="558.50" y="247.6" width="2.6" height=".9" fill="#8fe3a3"/><rect x="562.70" y="247.6" width="2.6" height=".9" fill="#8fe3a3"/><rect x="566.60" y="235.8" width="9.90" height="17.5" fill="#2db556"/><rect x="575.50" y="235.8" width=".8" height="17.5" fill="#52cb77"/><rect x="566.80" y="235.8" width="9.50" height=".7" fill="#43c26a"/><rect x="567.80" y="237.5" width="7.4" height=".9" fill="#8fe3a3"/><rect x="568.80" y="244.6" width="1.4" height=".9" fill="#8fe3a3"/><rect x="572.40" y="244.6" width="1.4" height=".9" fill="#8fe3a3"/><rect x="568.00" y="247.6" width="2.6" height=".9" fill="#8fe3a3"/><rect x="572.20" y="247.6" width="2.6" height=".9" fill="#8fe3a3"/><rect x="576.10" y="235.8" width="9.90" height="17.5" fill="#2db556"/><rect x="585.00" y="235.8" width=".8" height="17.5" fill="#52cb77"/><rect x="576.30" y="235.8" width="9.50" height=".7" fill="#43c26a"/><rect x="577.30" y="237.5" width="7.4" height=".9" fill="#8fe3a3"/><rect x="578.30" y="244.6" width="1.4" height=".9" fill="#8fe3a3"/><rect x="581.90" y="244.6" width="1.4" height=".9" fill="#8fe3a3"/><rect x="577.50" y="247.6" width="2.6" height=".9" fill="#8fe3a3"/><rect x="581.70" y="247.6" width="2.6" height=".9" fill="#8fe3a3"/><rect x="585.60" y="235.8" width="9.90" height="17.5" fill="#2db556"/><rect x="594.50" y="235.8" width=".8" height="17.5" fill="#52cb77"/><rect x="585.80" y="235.8" width="9.50" height=".7" fill="#43c26a"/><rect x="586.80" y="237.5" width="7.4" height=".9" fill="#8fe3a3"/><rect x="587.80" y="244.6" width="1.4" height=".9" fill="#8fe3a3"/><rect x="591.40" y="244.6" width="1.4" height=".9" fill="#8fe3a3"/><rect x="587.00" y="247.6" width="2.6" height=".9" fill="#8fe3a3"/><rect x="591.20" y="247.6" width="2.6" height=".9" fill="#8fe3a3"/><rect x="595.10" y="235.8" width="9.90" height="17.5" fill="#2db556"/><rect x="604.00" y="235.8" width=".8" height="17.5" fill="#52cb77"/><rect x="595.30" y="235.8" width="9.50" height=".7" fill="#43c26a"/><rect x="596.30" y="237.5" width="7.4" height=".9" fill="#8fe3a3"/><rect x="597.30" y="244.6" width="1.4" height=".9" fill="#8fe3a3"/><rect x="600.90" y="244.6" width="1.4" height=".9" fill="#8fe3a3"/><rect x="596.50" y="247.6" width="2.6" height=".9" fill="#8fe3a3"/><rect x="600.70" y="247.6" width="2.6" height=".9" fill="#8fe3a3"/><rect x="604.60" y="235.8" width="9.90" height="17.5" fill="#2db556"/><rect x="613.50" y="235.8" width=".8" height="17.5" fill="#52cb77"/><rect x="604.80" y="235.8" width="9.50" height=".7" fill="#43c26a"/><rect x="605.80" y="237.5" width="7.4" height=".9" fill="#8fe3a3"/><rect x="606.80" y="244.6" width="1.4" height=".9" fill="#8fe3a3"/><rect x="610.40" y="244.6" width="1.4" height=".9" fill="#8fe3a3"/><rect x="606.00" y="247.6" width="2.6" height=".9" fill="#8fe3a3"/><rect x="610.20" y="247.6" width="2.6" height=".9" fill="#8fe3a3"/><rect x="614.10" y="235.8" width="9.90" height="17.5" fill="#2db556"/><rect x="623.00" y="235.8" width=".8" height="17.5" fill="#52cb77"/><rect x="614.30" y="235.8" width="9.50" height=".7" fill="#43c26a"/><rect x="615.30" y="237.5" width="7.4" height=".9" fill="#8fe3a3"/><rect x="616.30" y="244.6" width="1.4" height=".9" fill="#8fe3a3"/><rect x="619.90" y="244.6" width="1.4" height=".9" fill="#8fe3a3"/><rect x="615.50" y="247.6" width="2.6" height=".9" fill="#8fe3a3"/><rect x="619.70" y="247.6" width="2.6" height=".9" fill="#8fe3a3"/><rect x="623.60" y="235.8" width="9.90" height="17.5" fill="#2db556"/><rect x="632.50" y="235.8" width=".8" height="17.5" fill="#52cb77"/><rect x="623.80" y="235.8" width="9.50" height=".7" fill="#43c26a"/><rect x="624.80" y="237.5" width="7.4" height=".9" fill="#8fe3a3"/><rect x="625.80" y="244.6" width="1.4" height=".9" fill="#8fe3a3"/><rect x="629.40" y="244.6" width="1.4" height=".9" fill="#8fe3a3"/><rect x="625.00" y="247.6" width="2.6" height=".9" fill="#8fe3a3"/><rect x="629.20" y="247.6" width="2.6" height=".9" fill="#8fe3a3"/><rect x="633.10" y="235.8" width="9.90" height="17.5" fill="#2db556"/><rect x="642.00" y="235.8" width=".8" height="17.5" fill="#52cb77"/><rect x="633.30" y="235.8" width="9.50" height=".7" fill="#43c26a"/><rect x="634.30" y="237.5" width="7.4" height=".9" fill="#8fe3a3"/><rect x="635.30" y="244.6" width="1.4" height=".9" fill="#8fe3a3"/><rect x="638.90" y="244.6" width="1.4" height=".9" fill="#8fe3a3"/><rect x="634.50" y="247.6" width="2.6" height=".9" fill="#8fe3a3"/><rect x="638.70" y="247.6" width="2.6" height=".9" fill="#8fe3a3"/><rect x="642.60" y="235.8" width="9.90" height="17.5" fill="#2db556"/><rect x="651.50" y="235.8" width=".8" height="17.5" fill="#52cb77"/><rect x="642.80" y="235.8" width="9.50" height=".7" fill="#43c26a"/><rect x="643.80" y="237.5" width="7.4" height=".9" fill="#8fe3a3"/><rect x="644.80" y="244.6" width="1.4" height=".9" fill="#8fe3a3"/><rect x="648.40" y="244.6" width="1.4" height=".9" fill="#8fe3a3"/><rect x="644.00" y="247.6" width="2.6" height=".9" fill="#8fe3a3"/><rect x="648.20" y="247.6" width="2.6" height=".9" fill="#8fe3a3"/><rect x="652.10" y="235.8" width="9.90" height="17.5" fill="#2db556"/><rect x="661.00" y="235.8" width=".8" height="17.5" fill="#52cb77"/><rect x="652.30" y="235.8" width="9.50" height=".7" fill="#43c26a"/><rect x="653.30" y="237.5" width="7.4" height=".9" fill="#8fe3a3"/><rect x="654.30" y="244.6" width="1.4" height=".9" fill="#8fe3a3"/><rect x="657.90" y="244.6" width="1.4" height=".9" fill="#8fe3a3"/><rect x="653.50" y="247.6" width="2.6" height=".9" fill="#8fe3a3"/><rect x="657.70" y="247.6" width="2.6" height=".9" fill="#8fe3a3"/><rect x="661.60" y="235.8" width="9.90" height="17.5" fill="#2db556"/><rect x="670.50" y="235.8" width=".8" height="17.5" fill="#52cb77"/><rect x="661.80" y="235.8" width="9.50" height=".7" fill="#43c26a"/><rect x="662.80" y="237.5" width="7.4" height=".9" fill="#8fe3a3"/><rect x="663.80" y="244.6" width="1.4" height=".9" fill="#8fe3a3"/><rect x="667.40" y="244.6" width="1.4" height=".9" fill="#8fe3a3"/><rect x="663.00" y="247.6" width="2.6" height=".9" fill="#8fe3a3"/><rect x="667.20" y="247.6" width="2.6" height=".9" fill="#8fe3a3"/><rect x="671.10" y="235.8" width="9.90" height="17.5" fill="#2db556"/><rect x="680.00" y="235.8" width=".8" height="17.5" fill="#52cb77"/><rect x="671.30" y="235.8" width="9.50" height=".7" fill="#43c26a"/><rect x="672.30" y="237.5" width="7.4" height=".9" fill="#8fe3a3"/><rect x="673.30" y="244.6" width="1.4" height=".9" fill="#8fe3a3"/><rect x="676.90" y="244.6" width="1.4" height=".9" fill="#8fe3a3"/><rect x="672.50" y="247.6" width="2.6" height=".9" fill="#8fe3a3"/><rect x="676.70" y="247.6" width="2.6" height=".9" fill="#8fe3a3"/><rect x="376.60" y="254.8" width="9.90" height="17.5" fill="#2db556"/><rect x="385.50" y="254.8" width=".8" height="17.5" fill="#52cb77"/><rect x="376.80" y="254.8" width="9.50" height=".7" fill="#43c26a"/><rect x="378.00" y="256.4" width="1.2" height=".9" fill="#8fe3a3"/><rect x="378.40" y="259.4" width="1.4" height=".9" fill="#8fe3a3"/><rect x="378.60" y="266.6" width="6.0" height=".9" fill="#8fe3a3"/><rect x="386.10" y="254.8" width="9.90" height="17.5" fill="#2db556"/><rect x="395.00" y="254.8" width=".8" height="17.5" fill="#52cb77"/><rect x="386.30" y="254.8" width="9.50" height=".7" fill="#43c26a"/><rect x="387.50" y="256.4" width="1.2" height=".9" fill="#8fe3a3"/><rect x="387.90" y="259.4" width="1.4" height=".9" fill="#8fe3a3"/><rect x="388.10" y="266.6" width="6.0" height=".9" fill="#8fe3a3"/><rect x="395.60" y="254.8" width="9.90" height="17.5" fill="#2db556"/><rect x="404.50" y="254.8" width=".8" height="17.5" fill="#52cb77"/><rect x="395.80" y="254.8" width="9.50" height=".7" fill="#43c26a"/><rect x="397.00" y="256.4" width="1.2" height=".9" fill="#8fe3a3"/><rect x="397.40" y="259.4" width="1.4" height=".9" fill="#8fe3a3"/><rect x="397.60" y="266.6" width="6.0" height=".9" fill="#8fe3a3"/><rect x="405.10" y="254.8" width="9.90" height="17.5" fill="#2db556"/><rect x="414.00" y="254.8" width=".8" height="17.5" fill="#52cb77"/><rect x="405.30" y="254.8" width="9.50" height=".7" fill="#43c26a"/><rect x="406.50" y="256.4" width="1.2" height=".9" fill="#8fe3a3"/><rect x="406.90" y="259.4" width="1.4" height=".9" fill="#8fe3a3"/><rect x="407.10" y="266.6" width="6.0" height=".9" fill="#8fe3a3"/><rect x="414.60" y="254.8" width="9.90" height="17.5" fill="#2db556"/><rect x="423.50" y="254.8" width=".8" height="17.5" fill="#52cb77"/><rect x="414.80" y="254.8" width="9.50" height=".7" fill="#43c26a"/><rect x="416.00" y="256.4" width="1.2" height=".9" fill="#8fe3a3"/><rect x="416.40" y="259.4" width="1.4" height=".9" fill="#8fe3a3"/><rect x="416.60" y="266.6" width="6.0" height=".9" fill="#8fe3a3"/><rect x="424.10" y="254.8" width="9.90" height="17.5" fill="#2db556"/><rect x="433.00" y="254.8" width=".8" height="17.5" fill="#52cb77"/><rect x="424.30" y="254.8" width="9.50" height=".7" fill="#43c26a"/><rect x="425.50" y="256.4" width="1.2" height=".9" fill="#8fe3a3"/><rect x="425.90" y="259.4" width="1.4" height=".9" fill="#8fe3a3"/><rect x="426.10" y="266.6" width="6.0" height=".9" fill="#8fe3a3"/><rect x="433.60" y="254.8" width="9.90" height="17.5" fill="#2db556"/><rect x="442.50" y="254.8" width=".8" height="17.5" fill="#52cb77"/><rect x="433.80" y="254.8" width="9.50" height=".7" fill="#43c26a"/><rect x="435.00" y="256.4" width="1.2" height=".9" fill="#8fe3a3"/><rect x="435.40" y="259.4" width="1.4" height=".9" fill="#8fe3a3"/><rect x="435.60" y="266.6" width="6.0" height=".9" fill="#8fe3a3"/><rect x="443.10" y="254.8" width="9.90" height="17.5" fill="#2db556"/><rect x="452.00" y="254.8" width=".8" height="17.5" fill="#52cb77"/><rect x="443.30" y="254.8" width="9.50" height=".7" fill="#43c26a"/><rect x="444.50" y="256.4" width="1.2" height=".9" fill="#8fe3a3"/><rect x="444.90" y="259.4" width="1.4" height=".9" fill="#8fe3a3"/><rect x="445.10" y="266.6" width="6.0" height=".9" fill="#8fe3a3"/><rect x="490.60" y="254.8" width="9.90" height="17.5" fill="#2db556"/><rect x="499.50" y="254.8" width=".8" height="17.5" fill="#52cb77"/><rect x="490.80" y="254.8" width="9.50" height=".7" fill="#43c26a"/><rect x="492.00" y="256.4" width="1.2" height=".9" fill="#8fe3a3"/><rect x="492.40" y="259.4" width="1.4" height=".9" fill="#8fe3a3"/><rect x="492.60" y="266.6" width="6.0" height=".9" fill="#8fe3a3"/><rect x="500.10" y="254.8" width="9.90" height="17.5" fill="#2db556"/><rect x="509.00" y="254.8" width=".8" height="17.5" fill="#52cb77"/><rect x="500.30" y="254.8" width="9.50" height=".7" fill="#43c26a"/><rect x="501.50" y="256.4" width="1.2" height=".9" fill="#8fe3a3"/><rect x="501.90" y="259.4" width="1.4" height=".9" fill="#8fe3a3"/><rect x="502.10" y="266.6" width="6.0" height=".9" fill="#8fe3a3"/><rect x="509.60" y="254.8" width="9.90" height="17.5" fill="#2db556"/><rect x="518.50" y="254.8" width=".8" height="17.5" fill="#52cb77"/><rect x="509.80" y="254.8" width="9.50" height=".7" fill="#43c26a"/><rect x="511.00" y="256.4" width="1.2" height=".9" fill="#8fe3a3"/><rect x="511.40" y="259.4" width="1.4" height=".9" fill="#8fe3a3"/><rect x="511.60" y="266.6" width="6.0" height=".9" fill="#8fe3a3"/><rect x="519.10" y="254.8" width="9.90" height="17.5" fill="#2db556"/><rect x="528.00" y="254.8" width=".8" height="17.5" fill="#52cb77"/><rect x="519.30" y="254.8" width="9.50" height=".7" fill="#43c26a"/><rect x="520.50" y="256.4" width="1.2" height=".9" fill="#8fe3a3"/><rect x="520.90" y="259.4" width="1.4" height=".9" fill="#8fe3a3"/><rect x="521.10" y="266.6" width="6.0" height=".9" fill="#8fe3a3"/><rect x="224.60" y="273.9" width="9.90" height="17.5" fill="#2db556"/><rect x="233.50" y="273.9" width=".8" height="17.5" fill="#52cb77"/><rect x="224.80" y="273.9" width="9.50" height=".7" fill="#43c26a"/><rect x="231.80" y="282.9" width="1.0" height=".9" fill="#8fe3a3"/><rect x="376.60" y="273.9" width="9.90" height="17.5" fill="#2db556"/><rect x="385.50" y="273.9" width=".8" height="17.5" fill="#52cb77"/><rect x="376.80" y="273.9" width="9.50" height=".7" fill="#43c26a"/><rect x="383.80" y="282.9" width="1.0" height=".9" fill="#8fe3a3"/><rect x="452.60" y="273.9" width="9.90" height="17.5" fill="#2db556"/><rect x="461.50" y="273.9" width=".8" height="17.5" fill="#52cb77"/><rect x="452.80" y="273.9" width="9.50" height=".7" fill="#43c26a"/><rect x="459.80" y="282.9" width="1.0" height=".9" fill="#8fe3a3"/><rect x="490.60" y="273.9" width="9.90" height="17.5" fill="#2db556"/><rect x="499.50" y="273.9" width=".8" height="17.5" fill="#52cb77"/><rect x="490.80" y="273.9" width="9.50" height=".7" fill="#43c26a"/><rect x="497.80" y="282.9" width="1.0" height=".9" fill="#8fe3a3"/><rect x="528.60" y="273.9" width="9.90" height="17.5" fill="#2db556"/><rect x="537.50" y="273.9" width=".8" height="17.5" fill="#52cb77"/><rect x="528.80" y="273.9" width="9.50" height=".7" fill="#43c26a"/><rect x="535.80" y="282.9" width="1.0" height=".9" fill="#8fe3a3"/><rect x="680.60" y="273.9" width="9.90" height="17.5" fill="#2db556"/><rect x="689.50" y="273.9" width=".8" height="17.5" fill="#52cb77"/><rect x="680.80" y="273.9" width="9.50" height=".7" fill="#43c26a"/><rect x="687.80" y="282.9" width="1.0" height=".9" fill="#8fe3a3"/><rect x="300.60" y="273.9" width="9.90" height="17.5" fill="#2db556"/><rect x="309.50" y="273.9" width=".8" height="17.5" fill="#52cb77"/><rect x="300.80" y="273.9" width="9.50" height=".7" fill="#43c26a"/><rect x="307.80" y="282.9" width="1.0" height=".9" fill="#8fe3a3"/><rect x="310.10" y="273.9" width="9.90" height="17.5" fill="#2db556"/><rect x="319.00" y="273.9" width=".8" height="17.5" fill="#52cb77"/><rect x="310.30" y="273.9" width="9.50" height=".7" fill="#43c26a"/><rect x="317.30" y="282.9" width="1.0" height=".9" fill="#8fe3a3"/><rect x="319.60" y="273.9" width="9.90" height="17.5" fill="#2db556"/><rect x="328.50" y="273.9" width=".8" height="17.5" fill="#52cb77"/><rect x="319.80" y="273.9" width="9.50" height=".7" fill="#43c26a"/><rect x="326.80" y="282.9" width="1.0" height=".9" fill="#8fe3a3"/><rect x="329.10" y="273.9" width="9.90" height="17.5" fill="#2db556"/><rect x="338.00" y="273.9" width=".8" height="17.5" fill="#52cb77"/><rect x="329.30" y="273.9" width="9.50" height=".7" fill="#43c26a"/><rect x="336.30" y="282.9" width="1.0" height=".9" fill="#8fe3a3"/><rect x="338.60" y="273.9" width="9.90" height="17.5" fill="#2db556"/><rect x="347.50" y="273.9" width=".8" height="17.5" fill="#52cb77"/><rect x="338.80" y="273.9" width="9.50" height=".7" fill="#43c26a"/><rect x="345.80" y="282.9" width="1.0" height=".9" fill="#8fe3a3"/><rect x="348.10" y="273.9" width="9.90" height="17.5" fill="#2db556"/><rect x="357.00" y="273.9" width=".8" height="17.5" fill="#52cb77"/><rect x="348.30" y="273.9" width="9.50" height=".7" fill="#43c26a"/><rect x="355.30" y="282.9" width="1.0" height=".9" fill="#8fe3a3"/><rect x="357.60" y="273.9" width="9.90" height="17.5" fill="#2db556"/><rect x="366.50" y="273.9" width=".8" height="17.5" fill="#52cb77"/><rect x="357.80" y="273.9" width="9.50" height=".7" fill="#43c26a"/><rect x="364.80" y="282.9" width="1.0" height=".9" fill="#8fe3a3"/><rect x="604.60" y="273.9" width="9.90" height="17.5" fill="#2db556"/><rect x="613.50" y="273.9" width=".8" height="17.5" fill="#52cb77"/><rect x="604.80" y="273.9" width="9.50" height=".7" fill="#43c26a"/><rect x="611.80" y="282.9" width="1.0" height=".9" fill="#8fe3a3"/><rect x="614.10" y="273.9" width="9.90" height="17.5" fill="#2db556"/><rect x="623.00" y="273.9" width=".8" height="17.5" fill="#52cb77"/><rect x="614.30" y="273.9" width="9.50" height=".7" fill="#43c26a"/><rect x="621.30" y="282.9" width="1.0" height=".9" fill="#8fe3a3"/><rect x="623.60" y="273.9" width="9.90" height="17.5" fill="#2db556"/><rect x="632.50" y="273.9" width=".8" height="17.5" fill="#52cb77"/><rect x="623.80" y="273.9" width="9.50" height=".7" fill="#43c26a"/><rect x="630.80" y="282.9" width="1.0" height=".9" fill="#8fe3a3"/><rect x="633.10" y="273.9" width="9.90" height="17.5" fill="#2db556"/><rect x="642.00" y="273.9" width=".8" height="17.5" fill="#52cb77"/><rect x="633.30" y="273.9" width="9.50" height=".7" fill="#43c26a"/><rect x="640.30" y="282.9" width="1.0" height=".9" fill="#8fe3a3"/><rect x="642.60" y="273.9" width="9.90" height="17.5" fill="#2db556"/><rect x="651.50" y="273.9" width=".8" height="17.5" fill="#52cb77"/><rect x="642.80" y="273.9" width="9.50" height=".7" fill="#43c26a"/><rect x="649.80" y="282.9" width="1.0" height=".9" fill="#8fe3a3"/><rect x="652.10" y="273.9" width="9.90" height="17.5" fill="#2db556"/><rect x="661.00" y="273.9" width=".8" height="17.5" fill="#52cb77"/><rect x="652.30" y="273.9" width="9.50" height=".7" fill="#43c26a"/><rect x="659.30" y="282.9" width="1.0" height=".9" fill="#8fe3a3"/><rect x="661.60" y="273.9" width="9.90" height="17.5" fill="#2db556"/><rect x="670.50" y="273.9" width=".8" height="17.5" fill="#52cb77"/><rect x="661.80" y="273.9" width="9.50" height=".7" fill="#43c26a"/><rect x="668.80" y="282.9" width="1.0" height=".9" fill="#8fe3a3"/><rect x="300.60" y="292.9" width="76.40" height="17.5" fill="#2db556"/><rect x="376.00" y="292.9" width=".8" height="17.5" fill="#52cb77"/><rect x="300.80" y="292.9" width="76.00" height=".7" fill="#43c26a"/><rect x="309.80" y="293.7" width="1" height="1.2" fill="#1f8a40"/><rect x="309.80" y="308.3" width="1" height="1.2" fill="#1f8a40"/><rect x="319.30" y="293.7" width="1" height="1.2" fill="#1f8a40"/><rect x="319.30" y="308.3" width="1" height="1.2" fill="#1f8a40"/><rect x="328.80" y="293.7" width="1" height="1.2" fill="#1f8a40"/><rect x="328.80" y="308.3" width="1" height="1.2" fill="#1f8a40"/><rect x="338.30" y="293.7" width="1" height="1.2" fill="#1f8a40"/><rect x="338.30" y="308.3" width="1" height="1.2" fill="#1f8a40"/><rect x="347.80" y="293.7" width="1" height="1.2" fill="#1f8a40"/><rect x="347.80" y="308.3" width="1" height="1.2" fill="#1f8a40"/><rect x="357.30" y="293.7" width="1" height="1.2" fill="#1f8a40"/><rect x="357.30" y="308.3" width="1" height="1.2" fill="#1f8a40"/><rect x="366.80" y="293.7" width="1" height="1.2" fill="#1f8a40"/><rect x="366.80" y="308.3" width="1" height="1.2" fill="#1f8a40"/><rect x="301.80" y="296.5" width="19.0" height=".9" fill="#8fe3a3"/><rect x="320.30" y="301.5" width="19.5" height=".9" fill="#8fe3a3"/><rect x="339.30" y="306.4" width="19.5" height=".9" fill="#8fe3a3"/><rect x="358.80" y="294.4" width="18.0" height=".9" fill="#8fe3a3"/><rect x="528.60" y="292.9" width="76.40" height="17.5" fill="#2db556"/><rect x="604.00" y="292.9" width=".8" height="17.5" fill="#52cb77"/><rect x="528.80" y="292.9" width="76.00" height=".7" fill="#43c26a"/><rect x="537.80" y="293.7" width="1" height="1.2" fill="#1f8a40"/><rect x="537.80" y="308.3" width="1" height="1.2" fill="#1f8a40"/><rect x="547.30" y="293.7" width="1" height="1.2" fill="#1f8a40"/><rect x="547.30" y="308.3" width="1" height="1.2" fill="#1f8a40"/><rect x="556.80" y="293.7" width="1" height="1.2" fill="#1f8a40"/><rect x="556.80" y="308.3" width="1" height="1.2" fill="#1f8a40"/><rect x="566.30" y="293.7" width="1" height="1.2" fill="#1f8a40"/><rect x="566.30" y="308.3" width="1" height="1.2" fill="#1f8a40"/><rect x="575.80" y="293.7" width="1" height="1.2" fill="#1f8a40"/><rect x="575.80" y="308.3" width="1" height="1.2" fill="#1f8a40"/><rect x="585.30" y="293.7" width="1" height="1.2" fill="#1f8a40"/><rect x="585.30" y="308.3" width="1" height="1.2" fill="#1f8a40"/><rect x="594.80" y="293.7" width="1" height="1.2" fill="#1f8a40"/><rect x="594.80" y="308.3" width="1" height="1.2" fill="#1f8a40"/><rect x="529.80" y="296.5" width="19.0" height=".9" fill="#8fe3a3"/><rect x="548.30" y="301.5" width="19.5" height=".9" fill="#8fe3a3"/><rect x="567.30" y="306.4" width="19.5" height=".9" fill="#8fe3a3"/><rect x="586.80" y="294.4" width="18.0" height=".9" fill="#8fe3a3"/><rect x="376.80" y="350.0" width="9.50" height="17.5" fill="#40444f"/><rect x="385.60" y="350.0" width=".7" height="17.5" fill="#363a44"/><rect x="215.10" y="369.0" width="9.90" height="17.5" fill="#2db556"/><rect x="224.00" y="369.0" width=".8" height="17.5" fill="#52cb77"/><rect x="215.30" y="369.0" width="9.50" height=".7" fill="#43c26a"/><rect x="222.30" y="378.0" width="1.0" height=".9" fill="#8fe3a3"/><rect x="414.60" y="369.0" width="9.90" height="17.5" fill="#2db556"/><rect x="423.50" y="369.0" width=".8" height="17.5" fill="#52cb77"/><rect x="414.80" y="369.0" width="9.50" height=".7" fill="#43c26a"/><rect x="415.80" y="383.0" width="1.0" height=".9" fill="#8fe3a3"/><rect x="424.10" y="369.0" width="9.90" height="17.5" fill="#2db556"/><rect x="433.00" y="369.0" width=".8" height="17.5" fill="#52cb77"/><rect x="424.30" y="369.0" width="9.50" height=".7" fill="#43c26a"/><rect x="425.30" y="383.0" width="1.0" height=".9" fill="#8fe3a3"/><rect x="433.60" y="369.0" width="9.90" height="17.5" fill="#2db556"/><rect x="442.50" y="369.0" width=".8" height="17.5" fill="#52cb77"/><rect x="433.80" y="369.0" width="9.50" height=".7" fill="#43c26a"/><rect x="434.80" y="383.0" width="1.0" height=".9" fill="#8fe3a3"/></svg>
<svg class="a" style="left:200px;top:100px" width="14" height="331" viewBox="0 0 14 331"><rect x="6.4" y="0" width="1.1" height="331" fill="#9a9da3"/></svg>
<svg class="a" style="left:201.5px;top:96.2px" width="11" height="7" viewBox="0 0 11 7"><path d="M.4.6h10.2L5.5 6.6z" fill="#b6efc4" opacity=".95"/></svg>
<svg class="a" style="left:314.6px;top:235px" width="10" height="14" viewBox="0 0 10 14"><path d="M1 .8v10l2.4-2.2 1.8 3.8 1.8-.8-1.8-3.6h3.2z" fill="#2a2a2a" stroke="#9a9a9a" stroke-width=".7"/></svg>
<div class="a" style="left:806.6px;top:66px;width:2.4px;height:369px;background:#1d1f23"></div>
<div class="a" style="left:388.4px;top:432px;width:115px;height:3px;background:#4b4e57;border-radius:1.5px 1.5px 0 0"></div>
</body></html>
